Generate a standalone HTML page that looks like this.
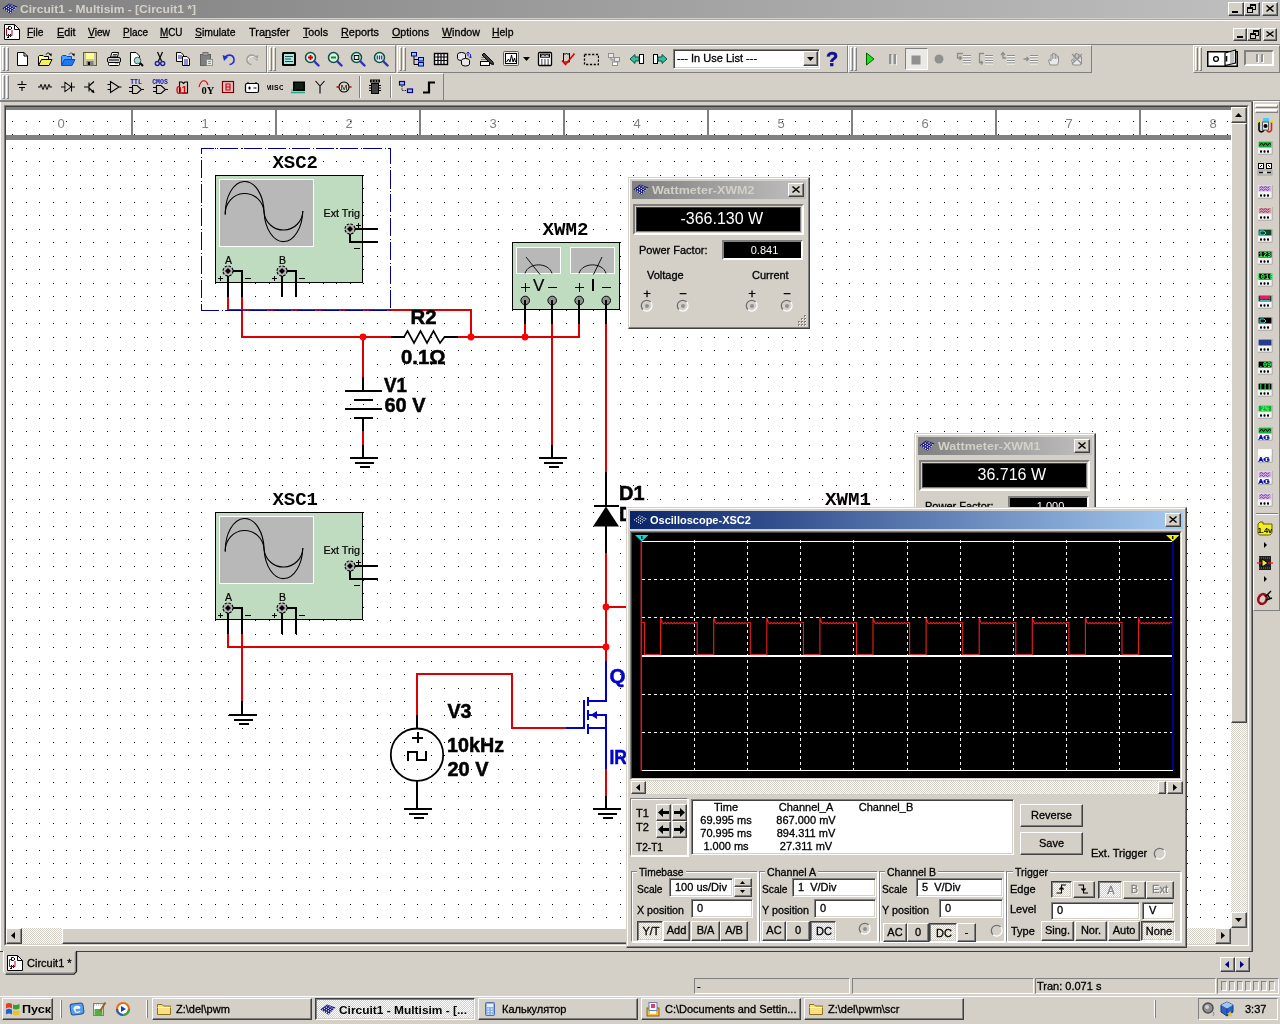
<!DOCTYPE html>
<html lang="ru"><head><meta charset="utf-8"><title>Circuit1 - Multisim - [Circuit1 *]</title>
<style>
*{box-sizing:border-box;margin:0;padding:0}
html,body{width:1280px;height:1024px;overflow:hidden;background:#d4d0c8}
body{position:relative;font-family:"Liberation Sans","DejaVu Sans",sans-serif;font-size:11px;color:#000;line-height:13px;-webkit-font-smoothing:none}
.a{position:absolute}
.t{position:absolute;white-space:nowrap;line-height:13px;height:13px;-webkit-text-stroke:0.3px currentColor}
.rb{position:absolute;background:#d4d0c8;border:1px solid;border-color:#fff #404040 #404040 #fff;box-shadow:inset -1px -1px 0 #808080,inset 1px 1px 0 #d4d0c8}
.rb2{position:absolute;background:#d4d0c8;border:1px solid;border-color:#d4d0c8 #404040 #404040 #d4d0c8;box-shadow:inset -1px -1px 0 #808080,inset 1px 1px 0 #fff}
.pb{position:absolute;border:1px solid;border-color:#404040 #fff #fff #404040;box-shadow:inset 1px 1px 0 #808080,inset -1px -1px 0 #d4d0c8;background-color:#eae8e4}
.sk{position:absolute;background:#fff;border:1px solid;border-color:#808080 #fff #fff #808080;box-shadow:inset 1px 1px 0 #404040,inset -1px -1px 0 #d4d0c8}
.sk1{position:absolute;border:1px solid;border-color:#808080 #fff #fff #808080}
.gb{position:absolute;border:1px solid;border-color:#808080 #fff #fff #808080;box-shadow:inset 1px 1px 0 #fff, 1px 1px 0 #fff}
.gl{position:absolute;background:#d4d0c8;padding:0 2px;white-space:nowrap;line-height:13px;height:13px}
.chk{background-color:#eae8e4}
.c{text-align:center}
.dis{color:#808080;text-shadow:1px 1px 0 #fff}
u{text-decoration:underline}
.win{position:absolute;background:#d4d0c8;border:1px solid;border-color:#d4d0c8 #404040 #404040 #d4d0c8;box-shadow:inset -1px -1px 0 #808080,inset 1px 1px 0 #fff}
.tb{position:absolute;height:26px;border-top:1px solid #fff;border-left:1px solid #fff;border-bottom:1px solid #808080;border-right:1px solid #808080}
.grip{position:absolute;width:3px;border-left:1px solid #fff;border-top:1px solid #fff;border-right:1px solid #808080;border-bottom:1px solid #808080}
.sep{position:absolute;width:2px;border-left:1px solid #808080;border-right:1px solid #fff}
</style></head>
<body>
<div id="root" style="position:absolute;left:0;top:0;width:1280px;height:1024px;will-change:transform">
<div class="a" style="left:0;top:0;width:1280px;height:18px;background:linear-gradient(to right,#808080,#c0c0c0)"></div><svg class="a" style="left:2px;top:1px" width="16" height="16" viewBox="0 0 16 16"><path d="M0.5 7.5 L7 2.5 L15.5 5.5 L8.5 12.8 Z" fill="#18187c"/><g stroke="#fff" stroke-width="1.1" stroke-dasharray="1.1 1.2" fill="none"><path d="M2.2 8.3 L8.2 3.6"/><path d="M4.2 9.5 L10.6 4.4"/><path d="M6.2 10.7 L12.8 5.3"/><path d="M8.2 11.8 L14.6 6.2"/></g></svg><div class="t " style="left:20px;top:3px;transform:scaleX(1.0949);transform-origin:0 0;font-weight:bold;-webkit-text-stroke:0;color:#d4d0c8">Circuit1 - Multisim - [Circuit1 *]</div><div class="rb" style="left:1228px;top:2px;width:16px;height:14px"><svg class="a" style="left:0;top:0" width="14" height="12" viewBox="0 0 14 12" shape-rendering="crispEdges"><rect x="3" y="8" width="6" height="2" fill="#000"/></svg></div><div class="rb" style="left:1244px;top:2px;width:16px;height:14px"><svg class="a" style="left:0;top:0" width="14" height="12" viewBox="0 0 14 12" shape-rendering="crispEdges"><rect x="5" y="1" width="6" height="2" fill="#000"/><rect x="5" y="1" width="1" height="3" fill="#000"/><rect x="10" y="1" width="1" height="6" fill="#000"/><rect x="8" y="6" width="3" height="1" fill="#000"/><rect x="2" y="4" width="6" height="2" fill="#000"/><rect x="2" y="4" width="1" height="6" fill="#000"/><rect x="7" y="4" width="1" height="6" fill="#000"/><rect x="2" y="9" width="6" height="1" fill="#000"/></svg></div><div class="rb" style="left:1262px;top:2px;width:16px;height:14px"><svg class="a" style="left:0;top:0" width="14" height="12" viewBox="0 0 14 12" ><path d="M3.5 2.5 L10.5 8.5 M10.5 2.5 L3.5 8.5" stroke="#000" stroke-width="1.5" fill="none"/></svg></div>
<div class="a" style="left:0;top:18px;width:1280px;height:1px;background:#d4d0c8"></div><div class="a" style="left:0;top:19px;width:1280px;height:1px;background:#a8a6a0"></div><div class="a" style="left:0;top:20px;width:1280px;height:1px;background:#fff"></div><div class="a" style="left:0;top:44px;width:1280px;height:1px;background:#808080"></div><svg class="a" style="left:4px;top:24px" width="17" height="17" viewBox="0 0 17 17"><path d="M0.5 0.5 H10.5 L15.5 5.5 V15.5 H0.5 Z" fill="#fff" stroke="#000" stroke-width="1"/><path d="M10.5 0.5 V5.5 H15.5" fill="none" stroke="#000" stroke-width="1"/><path d="M2.5 4.5 H5 M2.5 4.5 V11.5 H5 M8 6 V11.5 H6" fill="none" stroke="#b00030" stroke-width="1"/><path d="M4.5 2.5 H6.5 L8 4 L6.5 5.5 H4.5 Z" fill="#fff" stroke="#000" stroke-width="1"/><path d="M4 10 L7 13 M7 10 L4 13 M3 13.5 H5" stroke="#000" stroke-width="1" fill="none"/></svg><div class="t " style="left:27px;top:26px;transform:scaleX(0.9308);transform-origin:0 0;"><u>F</u>ile</div><div class="t " style="left:56.5px;top:26px;transform:scaleX(0.9759);transform-origin:0 0;"><u>E</u>dit</div><div class="t " style="left:88px;top:26px;transform:scaleX(0.9304);transform-origin:0 0;"><u>V</u>iew</div><div class="t " style="left:122.5px;top:26px;transform:scaleX(0.9085);transform-origin:0 0;"><u>P</u>lace</div><div class="t " style="left:160px;top:26px;transform:scaleX(0.8981);transform-origin:0 0;"><u>M</u>CU</div><div class="t " style="left:195px;top:26px;transform:scaleX(0.9463);transform-origin:0 0;"><u>S</u>imulate</div><div class="t " style="left:249px;top:26px;">Tra<u>n</u>sfer</div><div class="t " style="left:303px;top:26px;transform:scaleX(0.9735);transform-origin:0 0;"><u>T</u>ools</div><div class="t " style="left:340.5px;top:26px;transform:scaleX(0.9865);transform-origin:0 0;"><u>R</u>eports</div><div class="t " style="left:391.5px;top:26px;transform:scaleX(0.9759);transform-origin:0 0;"><u>O</u>ptions</div><div class="t " style="left:441.5px;top:26px;transform:scaleX(0.9712);transform-origin:0 0;"><u>W</u>indow</div><div class="t " style="left:492px;top:26px;transform:scaleX(0.9503);transform-origin:0 0;"><u>H</u>elp</div><div class="rb" style="left:1233px;top:28px;width:14px;height:13px"><svg class="a" style="left:0;top:0" width="12" height="11" viewBox="0 0 12 11" shape-rendering="crispEdges"><rect x="3" y="7" width="6" height="2" fill="#000"/></svg></div><div class="rb" style="left:1247px;top:28px;width:14px;height:13px"><svg class="a" style="left:0;top:0" width="12" height="11" viewBox="0 0 12 11" shape-rendering="crispEdges"><rect x="5" y="1" width="6" height="2" fill="#000"/><rect x="5" y="1" width="1" height="3" fill="#000"/><rect x="10" y="1" width="1" height="6" fill="#000"/><rect x="8" y="6" width="3" height="1" fill="#000"/><rect x="2" y="4" width="6" height="2" fill="#000"/><rect x="2" y="4" width="1" height="6" fill="#000"/><rect x="7" y="4" width="1" height="6" fill="#000"/><rect x="2" y="9" width="6" height="1" fill="#000"/></svg></div><div class="rb" style="left:1263px;top:28px;width:14px;height:13px"><svg class="a" style="left:0;top:0" width="12" height="11" viewBox="0 0 12 11" ><path d="M2.5 2.5 L9.5 7.5 M9.5 2.5 L2.5 7.5" stroke="#000" stroke-width="1.5" fill="none"/></svg></div>
<div class="a" style="left:0px;top:45px;width:267px;height:28px;border:1px solid;border-color:#fff #808080 #808080 #fff"></div><div class="a" style="left:2px;top:47px;width:3px;height:24px;border:1px solid;border-color:#fff #808080 #808080 #fff"></div><div class="a" style="left:6px;top:47px;width:3px;height:24px;border:1px solid;border-color:#fff #808080 #808080 #fff"></div><div class="a" style="left:267px;top:45px;width:129px;height:28px;border:1px solid;border-color:#fff #808080 #808080 #fff"></div><div class="a" style="left:269px;top:47px;width:3px;height:24px;border:1px solid;border-color:#fff #808080 #808080 #fff"></div><div class="a" style="left:273px;top:47px;width:3px;height:24px;border:1px solid;border-color:#fff #808080 #808080 #fff"></div><div class="a" style="left:397px;top:45px;width:451px;height:28px;border:1px solid;border-color:#fff #808080 #808080 #fff"></div><div class="a" style="left:399px;top:47px;width:3px;height:24px;border:1px solid;border-color:#fff #808080 #808080 #fff"></div><div class="a" style="left:403px;top:47px;width:3px;height:24px;border:1px solid;border-color:#fff #808080 #808080 #fff"></div><div class="a" style="left:848px;top:45px;width:244px;height:28px;border:1px solid;border-color:#fff #808080 #808080 #fff"></div><div class="a" style="left:850px;top:47px;width:3px;height:24px;border:1px solid;border-color:#fff #808080 #808080 #fff"></div><div class="a" style="left:854px;top:47px;width:3px;height:24px;border:1px solid;border-color:#fff #808080 #808080 #fff"></div><div class="a" style="left:1193px;top:45px;width:87px;height:28px;border:1px solid;border-color:#fff #808080 #808080 #fff"></div><div class="a" style="left:1195px;top:47px;width:3px;height:24px;border:1px solid;border-color:#fff #808080 #808080 #fff"></div><div class="a" style="left:1199px;top:47px;width:3px;height:24px;border:1px solid;border-color:#fff #808080 #808080 #fff"></div><svg class="a" style="left:14px;top:51px" width="16" height="16" viewBox="0 0 16 16"><path d="M3.5 1.5 H10 L13.5 5 V14.5 H3.5 Z" fill="#fff" stroke="#000"/><path d="M10 1.5 V5 H13.5" fill="none" stroke="#000"/></svg><svg class="a" style="left:37px;top:51px" width="16" height="16" viewBox="0 0 16 16"><path d="M1.5 14 V5.5 L2.5 4.5 H6 L7 5.5 H11.5 V8" fill="#ffff99" stroke="#000"/><path d="M1.5 14.5 L4.5 8.5 H15 L12 14.5 Z" fill="#f0f060" stroke="#000"/><path d="M9 3.5 C10 1.5 12.5 1.5 13.5 3.8" fill="none" stroke="#000"/><path d="M11.8 3 L14.8 2.6 L14.4 5.6 Z" fill="#000"/></svg><svg class="a" style="left:60px;top:51px" width="16" height="16" viewBox="0 0 16 16"><path d="M1.5 14 V5.5 L2.5 4.5 H6 L7 5.5 H11.5 V8" fill="#4aa0ff" stroke="#1048c0"/><path d="M1.5 14.5 L4.5 8.5 H15 L12 14.5 Z" fill="#1e78f0" stroke="#1048c0"/><path d="M9 3.5 C10 1.5 12.5 1.5 13.5 3.8" fill="none" stroke="#1048c0"/><path d="M11.8 3 L14.8 2.6 L14.4 5.6 Z" fill="#000"/></svg><svg class="a" style="left:82px;top:51px" width="16" height="16" viewBox="0 0 16 16"><rect x="1.5" y="1.5" width="13" height="13" fill="#c8c8b0" stroke="#606040"/><rect x="4" y="2" width="8" height="6" fill="#ffff90"/><rect x="4.5" y="10" width="7" height="4.5" fill="#808080"/><rect x="6" y="11" width="2" height="3" fill="#000"/></svg><svg class="a" style="left:106px;top:51px" width="16" height="16" viewBox="0 0 16 16"><path d="M4.5 6 L6 1.5 H12.5 L11.5 6 Z" fill="#fff" stroke="#000"/><path d="M7 3.5 H11 M6.5 5 H10.5" stroke="#000" stroke-width="0.8"/><rect x="1.5" y="6.5" width="13" height="5" rx="1.5" fill="#d8d8d8" stroke="#000"/><rect x="2.5" y="11.5" width="11" height="3" rx="1" fill="#fff" stroke="#000"/><path d="M3 9 H13" stroke="#000"/><rect x="9" y="12" width="3" height="1.2" fill="#e0e000"/></svg><svg class="a" style="left:128px;top:51px" width="16" height="16" viewBox="0 0 16 16"><path d="M2.5 1.5 H8 L11.5 5 V14.5 H2.5 Z" fill="#fff" stroke="#000"/><circle cx="9.5" cy="9.5" r="3.3" fill="#a8d8d0" stroke="#406060"/><path d="M12 12 L15 15" stroke="#000" stroke-width="2"/></svg><svg class="a" style="left:152px;top:51px" width="16" height="16" viewBox="0 0 16 16"><path d="M5.5 1 L9.5 10 M10.5 1 L6.5 10" stroke="#000" stroke-width="1.2" fill="none"/><circle cx="5.3" cy="12.5" r="2" fill="none" stroke="#2020a0" stroke-width="1.4"/><circle cx="10.7" cy="12.5" r="2" fill="none" stroke="#2020a0" stroke-width="1.4"/></svg><svg class="a" style="left:175px;top:51px" width="16" height="16" viewBox="0 0 16 16"><path d="M1.5 1.5 H6 L8.5 4 V10.5 H1.5 Z" fill="#fff" stroke="#000"/><path d="M3 5 H7 M3 7 H7" stroke="#2020a0"/><path d="M7.5 5.5 H12 L14.5 8 V14.5 H7.5 Z" fill="#fff" stroke="#000"/><path d="M9 9 H13 M9 11 H13 M9 13 H13" stroke="#2020a0"/></svg><svg class="a" style="left:198px;top:51px" width="16" height="16" viewBox="0 0 16 16"><rect x="2.5" y="3.5" width="10" height="11" fill="#808080" stroke="#606060"/><rect x="5" y="1.5" width="5" height="3" fill="#a0a0a0" stroke="#707070"/><rect x="8.5" y="8.5" width="6" height="6" fill="#e8e8e8" stroke="#909090"/><path d="M10 10.5 H13 M10 12.5 H13" stroke="#909090"/></svg><svg class="a" style="left:221px;top:51px" width="16" height="16" viewBox="0 0 16 16"><path d="M4 7 C6 3 12 3 13 8 C13.5 11.5 11 13.5 8.5 13.5" fill="none" stroke="#2030d0" stroke-width="1.6"/><path d="M1.5 4 L7 6 L3 10 Z" fill="#2030d0"/></svg><svg class="a" style="left:244px;top:51px" width="16" height="16" viewBox="0 0 16 16"><path d="M12 7 C10 3 4 3 3 8 C2.5 11.5 5 13.5 7.5 13.5" fill="none" stroke="#a0a0a0" stroke-width="1.6"/><path d="M14.5 4 L9 6 L13 10 Z" fill="#a0a0a0"/><path d="M12.5 8 C10.5 4.5 5 4.5 4 9" fill="none" stroke="#fff" stroke-width="0.8"/></svg><svg class="a" style="left:281px;top:51px" width="16" height="16" viewBox="0 0 16 16"><rect x="1" y="1" width="14" height="14" rx="1.5" fill="#000"/><rect x="3" y="3" width="10" height="10" fill="#b0e8e0"/><path d="M4 5.5 H12 M4 8 H10 M4 10.5 H12" stroke="#205050"/></svg><svg class="a" style="left:304px;top:51px" width="16" height="16" viewBox="0 0 16 16"><circle cx="6.5" cy="6.5" r="5" fill="#d8f0e8" stroke="#105040" stroke-width="1.5"/><path d="M4 6.5 H9 M6.5 4 V9" stroke="#d00000" stroke-width="1.8"/><path d="M10.5 10.5 L14.5 14.5" stroke="#3030c0" stroke-width="2.4" stroke-linecap="round"/></svg><svg class="a" style="left:327px;top:51px" width="16" height="16" viewBox="0 0 16 16"><circle cx="6.5" cy="6.5" r="5" fill="#d8f0e8" stroke="#105040" stroke-width="1.5"/><path d="M4 6.5 H9" stroke="#109020" stroke-width="2"/><path d="M10.5 10.5 L14.5 14.5" stroke="#3030c0" stroke-width="2.4" stroke-linecap="round"/></svg><svg class="a" style="left:350px;top:51px" width="16" height="16" viewBox="0 0 16 16"><circle cx="6.5" cy="6.5" r="5" fill="#d8f0e8" stroke="#105040" stroke-width="1.5"/><rect x="4.3" y="4.5" width="4.5" height="4" fill="none" stroke="#000" stroke-width="1"/><path d="M10.5 10.5 L14.5 14.5" stroke="#3030c0" stroke-width="2.4" stroke-linecap="round"/></svg><svg class="a" style="left:373px;top:51px" width="16" height="16" viewBox="0 0 16 16"><circle cx="6.5" cy="6.5" r="5" fill="#d8f0e8" stroke="#105040" stroke-width="1.5"/><path d="M4.3 4.5 V8.5 M6.5 4.5 V8.5 M8.7 4.5 V8.5" stroke="#2030c0" stroke-width="1.2"/><path d="M10.5 10.5 L14.5 14.5" stroke="#3030c0" stroke-width="2.4" stroke-linecap="round"/></svg><svg class="a" style="left:410px;top:51px" width="16" height="16" viewBox="0 0 16 16"><rect x="1.5" y="1.5" width="5" height="3.5" fill="#8cc8ff" stroke="#000080"/><rect x="8.5" y="6.5" width="5" height="3.5" fill="#8cc8ff" stroke="#000080"/><rect x="8.5" y="11.5" width="5" height="3.5" fill="#8cc8ff" stroke="#000080"/><path d="M4 5 V13.5 H8.5 M4 8.5 H8.5" fill="none" stroke="#000"/></svg><svg class="a" style="left:433px;top:51px" width="16" height="16" viewBox="0 0 16 16"><rect x="1.5" y="2.5" width="13" height="11" fill="#fff" stroke="#000" stroke-width="1.4"/><path d="M1.5 6 H14.5 M1.5 9.5 H14.5 M5 2.5 V13.5 M8 2.5 V13.5 M11 2.5 V13.5" stroke="#000" stroke-width="1.2"/></svg><svg class="a" style="left:456px;top:51px" width="16" height="16" viewBox="0 0 16 16"><ellipse cx="5.5" cy="3.5" rx="4" ry="2" fill="#e8e8e8" stroke="#000"/><path d="M1.5 3.5 V7.5 A4 2 0 0 0 9.5 7.5 V3.5" fill="#e8e8e8" stroke="#000"/><ellipse cx="9.5" cy="9.5" rx="4" ry="2" fill="#e8e8e8" stroke="#000"/><path d="M5.5 9.5 V13 A4 2 0 0 0 13.5 13 V9.5" fill="#e8e8e8" stroke="#000"/><path d="M12 1 V5 M10.5 2.5 L12 1 L13.5 2.5 M14.5 3 V7 M13 5.5 L14.5 7 L16 5.5" fill="none" stroke="#2020c0"/></svg><svg class="a" style="left:479px;top:51px" width="16" height="16" viewBox="0 0 16 16"><rect x="1.5" y="10.5" width="9" height="4" fill="#fff" stroke="#000"/><path d="M3 4 L5 2 L14 11 L14.5 13.5 L12 13 Z" fill="#404040" stroke="#000"/><path d="M2 6.5 H5 M2 8.5 H7" stroke="#c08000"/></svg><svg class="a" style="left:503px;top:51px" width="16" height="16" viewBox="0 0 16 16"><rect x="0.5" y="0.5" width="15" height="14" rx="1" fill="#e8e8e8" stroke="#606060"/><rect x="2.5" y="2.5" width="11" height="10" fill="#fff" stroke="#000"/><path d="M3.5 11 L5.5 8 L7 11 L8.5 4 L10 11 L11.5 7 L12.5 11" fill="none" stroke="#000"/></svg><svg class="a" style="left:537px;top:51px" width="16" height="16" viewBox="0 0 16 16"><rect x="1.5" y="1.5" width="13" height="13" rx="1" fill="#fff" stroke="#000" stroke-width="1.3"/><rect x="3.5" y="3.2" width="9" height="3" fill="#fff" stroke="#000"/><path d="M4 5 L6 3.5 L8 5 L10 3.5 L12 5" fill="none" stroke="#000" stroke-width="0.8"/><path d="M4 9 H5.5 M7.2 9 H8.7 M10.4 9 H11.9 M4 11 H5.5 M7.2 11 H8.7 M10.4 11 H11.9 M4 13 H5.5 M7.2 13 H8.7 M10.4 13 H11.9" stroke="#000" stroke-width="1.2"/></svg><svg class="a" style="left:560px;top:51px" width="16" height="16" viewBox="0 0 16 16"><path d="M3.5 2 V11 H9.5 V2" fill="none" stroke="#000"/><path d="M3.5 2 L5 3.5 L6.5 2 L8 3.5 L9.5 2" fill="none" stroke="#000"/><path d="M2 9.5 L5.5 13.5 L14.5 2.5" fill="none" stroke="#e00000" stroke-width="1.6"/></svg><svg class="a" style="left:583px;top:51px" width="16" height="16" viewBox="0 0 16 16"><rect x="1.5" y="3.5" width="14" height="10" fill="none" stroke="#000" stroke-width="1.3" stroke-dasharray="2.2 1.6"/></svg><svg class="a" style="left:606px;top:51px" width="16" height="16" viewBox="0 0 16 16"><rect x="2.5" y="2.5" width="5" height="4" fill="#e8e8e8" stroke="#909090"/><rect x="8.5" y="6.5" width="5" height="4" fill="#e8e8e8" stroke="#909090"/><rect x="6.5" y="11" width="5" height="3.5" fill="#fff" stroke="#909090"/><path d="M5 6.5 V9 H8.5 M9 11 V10.5" fill="none" stroke="#909090"/></svg><svg class="a" style="left:629px;top:51px" width="16" height="16" viewBox="0 0 16 16"><path d="M1 8 L6 3.5 V6 H10 V10 H6 V12.5 Z" fill="#30c0a0" stroke="#105040"/><rect x="10.5" y="3.5" width="4" height="9" fill="#fff" stroke="#000"/></svg><svg class="a" style="left:652px;top:51px" width="16" height="16" viewBox="0 0 16 16"><rect x="1.5" y="3.5" width="4" height="9" fill="#fff" stroke="#000"/><path d="M15 8 L10 3.5 V6 H6 V10 H10 V12.5 Z" fill="#30c0a0" stroke="#105040"/></svg><svg class="a" style="left:523px;top:57px" width="7" height="4"><path d="M0 0 H7 L3.5 4 Z" fill="#000"/></svg><div class="sk" style="left:673px;top:49px;width:147px;height:20px"></div><div class="t " style="left:677px;top:52px;">--- In Use List ---</div><div class="rb" style="left:803px;top:51px;width:15px;height:15px"><svg class="a" style="left:3px;top:5px" width="7" height="4"><path d="M0 0 H7 L3.5 4 Z" fill="#000"/></svg></div><svg class="a" style="left:824px;top:51px" width="16" height="16" viewBox="0 0 16 16"><text x="8" y="15" text-anchor="middle" font-family="Liberation Sans,sans-serif" font-weight="bold" font-size="20" fill="#10108c" stroke="#10108c" stroke-width="0.6">?</text></svg><div class="a chk" style="left:905px;top:48px;width:23px;height:22px;border:1px solid;border-color:#808080 #fff #fff #808080;background:#ebe9e5"></div><svg class="a" style="left:862px;top:51px" width="16" height="16" viewBox="0 0 16 16"><path d="M4.5 2 L12 8 L4.5 14 Z" fill="#20e020" stroke="#006000" stroke-width="1"/></svg><svg class="a" style="left:885px;top:51px" width="16" height="16" viewBox="0 0 16 16"><rect x="4" y="3" width="2.6" height="10" fill="#909090"/><rect x="8.6" y="3" width="2.6" height="10" fill="#909090"/><rect x="6.6" y="4" width="0.8" height="10" fill="#fff"/><rect x="11.2" y="4" width="0.8" height="10" fill="#fff"/></svg><svg class="a" style="left:908px;top:52px" width="16" height="16" viewBox="0 0 16 16"><rect x="3.5" y="3.5" width="9" height="9" fill="#909090"/></svg><svg class="a" style="left:931px;top:51px" width="16" height="16" viewBox="0 0 16 16"><circle cx="8" cy="8" r="4.5" fill="#909090"/></svg><svg class="a" style="left:956px;top:51px" width="16" height="16" viewBox="0 0 16 16"><path d="M7 4.5 H15 M7 7 H15 M7 9.5 H15 M7 12 H15" stroke="#8c8c8c" stroke-width="1"/><path d="M7 5.5 H15 M7 8 H15 M7 10.5 H15 M7 13 H15" stroke="#fff" stroke-width="0.8"/><path d="M6 7 H1.5 V2.5 H7 M1.5 7 H5 M3.5 5 L5.5 7 L3.5 9" fill="none" stroke="#8c8c8c" stroke-width="1.3"/></svg><svg class="a" style="left:978px;top:51px" width="16" height="16" viewBox="0 0 16 16"><path d="M7 4.5 H15 M7 7 H15 M7 9.5 H15 M7 12 H15" stroke="#8c8c8c" stroke-width="1"/><path d="M7 5.5 H15 M7 8 H15 M7 10.5 H15 M7 13 H15" stroke="#fff" stroke-width="0.8"/><path d="M6 2.5 H1.5 V11.5 H4 M3 10 L4.5 11.5 L3 13.5" fill="none" stroke="#8c8c8c" stroke-width="1.3"/></svg><svg class="a" style="left:1000px;top:51px" width="16" height="16" viewBox="0 0 16 16"><path d="M7 4.5 H15 M7 7 H15 M7 9.5 H15 M7 12 H15" stroke="#8c8c8c" stroke-width="1"/><path d="M7 5.5 H15 M7 8 H15 M7 10.5 H15 M7 13 H15" stroke="#fff" stroke-width="0.8"/><path d="M3 2 V7 H6 M1 4 L3 1.5 L5 4" fill="none" stroke="#8c8c8c" stroke-width="1.3"/></svg><svg class="a" style="left:1023px;top:51px" width="16" height="16" viewBox="0 0 16 16"><path d="M7 4.5 H15 M7 7 H15 M7 9.5 H15 M7 12 H15" stroke="#8c8c8c" stroke-width="1"/><path d="M7 5.5 H15 M7 8 H15 M7 10.5 H15 M7 13 H15" stroke="#fff" stroke-width="0.8"/><path d="M0.5 8 H5.5 M3.5 6 L5.5 8 L3.5 10" fill="none" stroke="#8c8c8c" stroke-width="1.3"/></svg><svg class="a" style="left:1046px;top:51px" width="16" height="16" viewBox="0 0 16 16"><path d="M4 14 L2.5 9 L4 8.5 L5 10 V4 H6.5 V2.5 H8 V3 H9.5 V4 H11 V5.5 H12.5 V11 L11.5 14 Z" fill="#e8e8e8" stroke="#909090" stroke-width="1"/><path d="M6.5 4 V8 M8 3 V8 M9.5 4 V8 M11 5.5 V8" stroke="#909090" stroke-width="0.8"/></svg><svg class="a" style="left:1069px;top:51px" width="16" height="16" viewBox="0 0 16 16"><path d="M4 14 L2.5 9 L4 8.5 L5 10 V4 H6.5 V2.5 H8 V3 H9.5 V4 H11 V5.5 H12.5 V11 L11.5 14 Z" fill="#e8e8e8" stroke="#909090" stroke-width="1"/><path d="M6.5 4 V8 M8 3 V8 M9.5 4 V8 M11 5.5 V8" stroke="#909090" stroke-width="0.8"/><path d="M3 3 L13 13 M13 3 L3 13" stroke="#909090" stroke-width="1.2"/></svg><svg class="a" style="left:1207px;top:49px" width="31" height="18" viewBox="0 0 31 18"><rect x="0.75" y="2.75" width="29.5" height="14.5" fill="#fff" stroke="#000" stroke-width="1.5"/><path d="M18 4 L28.5 1 V14 L18 16.5 Z" fill="#fff" stroke="#000" stroke-width="1.2"/><path d="M19.5 7 V12.5" stroke="#000" stroke-width="1.6"/><path d="M24 3 V14.8 M26 2.5 V14.3" stroke="#808080" stroke-width="1"/><ellipse cx="9" cy="10" rx="2.4" ry="2.4" fill="none" stroke="#000" stroke-width="1.3"/></svg><div class="a" style="left:1244px;top:50px;width:30px;height:16px;border:2px solid;border-color:#808080 #fff #fff #808080"></div><div class="a" style="left:1256px;top:54px;width:2px;height:8px;background:#909090;box-shadow:1px 1px 0 #fff"></div><div class="a" style="left:1261px;top:54px;width:2px;height:8px;background:#909090;box-shadow:1px 1px 0 #fff"></div><div class="a" style="left:0px;top:73px;width:444px;height:28px;border:1px solid;border-color:#fff #808080 #808080 #fff"></div><div class="a" style="left:2px;top:75px;width:3px;height:24px;border:1px solid;border-color:#fff #808080 #808080 #fff"></div><div class="a" style="left:6px;top:75px;width:3px;height:24px;border:1px solid;border-color:#fff #808080 #808080 #fff"></div><svg class="a" style="left:14px;top:79px" width="16" height="16" viewBox="0 0 16 16"><path d="M8 2 V5.5 M3.5 5.5 H12.5 M5 8.5 H11 M8 8.5 V12" stroke="#000" stroke-width="1.1" fill="none"/></svg><svg class="a" style="left:37px;top:79px" width="16" height="16" viewBox="0 0 16 16"><path d="M1 8 H3 Q4 3 5 8 T7 8 T9 8 T11 8 T13 8 H15" stroke="#000" stroke-width="1.1" fill="none"/></svg><svg class="a" style="left:60px;top:79px" width="16" height="16" viewBox="0 0 16 16"><path d="M1 8 H15 M5 3.5 V12.5 L11 8 Z M11.5 3.5 V12.5 M5 3.5 L11 8" stroke="#000" stroke-width="1.1" fill="none"/><path d="M5.5 4.5 V11.5 L10.5 8 Z" fill="#d4d0c8"/></svg><svg class="a" style="left:82px;top:79px" width="16" height="16" viewBox="0 0 16 16"><path d="M2 8 H7 M7 3.5 V12.5 M7 7 L12 2.5 M7 9 L12 13.5" stroke="#000" stroke-width="1.1" fill="none"/><path d="M12.5 14 L9 13 L11.5 10.5 Z" fill="#000"/></svg><svg class="a" style="left:106px;top:79px" width="16" height="16" viewBox="0 0 16 16"><path d="M4.5 2.5 V13.5 L13 8 Z M1.5 5.5 H4.5 M1.5 10.5 H4.5 M13 8 H15.5" stroke="#000" stroke-width="1.1" fill="none"/></svg><svg class="a" style="left:128px;top:79px" width="16" height="16" viewBox="0 0 16 16"><text x="8" y="5" text-anchor="middle" font-family="Liberation Mono,monospace" font-weight="bold" font-size="6.5" fill="#1010c0">TTL</text><path d="M4.5 6.5 H9 L13.5 10.5 L9 14.5 H4.5 Z M1 8.5 H4.5 M1 12.5 H4.5 M13.5 10.5 H16" stroke="#000" stroke-width="1.1" fill="none"/></svg><svg class="a" style="left:152px;top:79px" width="16" height="16" viewBox="0 0 16 16"><text x="8" y="5" text-anchor="middle" font-family="Liberation Mono,monospace" font-weight="bold" font-size="6.5" fill="#1010c0">CMOS</text><path d="M4.5 6.5 H9 L13.5 10.5 L9 14.5 H4.5 Z M1 8.5 H4.5 M1 12.5 H4.5 M13.5 10.5 H16" stroke="#000" stroke-width="1.1" fill="none"/></svg><svg class="a" style="left:175px;top:79px" width="16" height="16" viewBox="0 0 16 16"><path d="M4.5 3 H7 L8.5 4.5 L10 3 H12.5 V14 H4.5 Z" fill="none" stroke="#000" stroke-width="1.1"/><text x="1" y="14.5" font-family="Liberation Sans,sans-serif" font-weight="bold" font-size="10" fill="#e00000">01</text></svg><svg class="a" style="left:198px;top:79px" width="16" height="16" viewBox="0 0 16 16"><path d="M1 8 C3 0 8 0 10 6" fill="none" stroke="#e00000" stroke-width="1.1"/><text x="3.5" y="15" font-family="Liberation Serif,serif" font-weight="bold" font-size="10.5" fill="#000">0Y</text></svg><svg class="a" style="left:220px;top:79px" width="16" height="16" viewBox="0 0 16 16"><rect x="2.5" y="2.5" width="11" height="11" fill="#f0c0c0" stroke="#700000" stroke-width="1.2"/><path d="M6 5 H10 V8 H6 Z M6 8 V11 H10 V8" fill="none" stroke="#c00000" stroke-width="1.1"/></svg><svg class="a" style="left:244px;top:79px" width="16" height="16" viewBox="0 0 16 16"><rect x="1.5" y="4.5" width="13" height="9" rx="1.5" fill="#fff" stroke="#000" stroke-width="1.2"/><path d="M4 3 V4.5 M12 3 V4.5 M4 9 H7 M5.5 7.5 V10.5 M9.5 9 H12.5" stroke="#000" stroke-width="1.1"/></svg><svg class="a" style="left:267px;top:79px" width="16" height="16" viewBox="0 0 16 16"><text x="8" y="11" text-anchor="middle" font-family="Liberation Sans,sans-serif" font-weight="bold" font-size="7" fill="#000" letter-spacing="0.3">MISC</text></svg><svg class="a" style="left:290px;top:79px" width="16" height="16" viewBox="0 0 16 16"><rect x="3" y="2.5" width="12" height="9.5" fill="#000"/><rect x="4.5" y="4" width="9" height="6.5" fill="#102018"/><path d="M1 13.5 H15" stroke="#20b090" stroke-width="1.6"/><path d="M1 11 H3" stroke="#20b090" stroke-width="1.2"/></svg><svg class="a" style="left:312px;top:79px" width="16" height="16" viewBox="0 0 16 16"><path d="M8 14.5 V7 M8 7 L3.5 2 M8 7 L12.5 2" stroke="#000" stroke-width="1.1" fill="none"/></svg><svg class="a" style="left:336px;top:79px" width="16" height="16" viewBox="0 0 16 16"><circle cx="8" cy="8" r="5" fill="none" stroke="#000" stroke-width="1.1"/><path d="M0.5 8 H3 M13 8 H15.5" stroke="#c00000" stroke-width="1.3"/><text x="8" y="11" text-anchor="middle" font-family="Liberation Sans,sans-serif" font-size="8" fill="#000">M</text></svg><svg class="a" style="left:367px;top:79px" width="16" height="16" viewBox="0 0 16 16"><rect x="4.5" y="4.5" width="7" height="10" fill="#404040" stroke="#000"/><path d="M2 6.5 H4.5 M2 9 H4.5 M2 11.5 H4.5 M11.5 6.5 H14 M11.5 9 H14 M11.5 11.5 H14" stroke="#000" stroke-width="1.2"/><rect x="3" y="0.5" width="10" height="3" fill="#000"/><path d="M4.5 2 H6 M7.5 2 H9 M10 2 H11.5" stroke="#fff" stroke-width="0.8"/></svg><svg class="a" style="left:398px;top:79px" width="16" height="16" viewBox="0 0 16 16"><rect x="1.5" y="2.5" width="5" height="3.5" fill="#a0c0ff" stroke="#000080" stroke-width="1.2"/><rect x="9.5" y="10" width="5" height="3.5" fill="#a0c0ff" stroke="#000080" stroke-width="1.2"/><path d="M4 7 V11.5 H9" fill="none" stroke="#000" stroke-width="1" stroke-dasharray="1.2 1.2"/></svg><svg class="a" style="left:421px;top:79px" width="16" height="16" viewBox="0 0 16 16"><path d="M2 13.5 H8 V3.5 H14" fill="none" stroke="#000" stroke-width="2.2"/></svg><div class="sep" style="left:359px;top:76px;height:22px"></div><div class="sep" style="left:390px;top:76px;height:22px"></div><div class="a" style="left:0;top:101px;width:1253px;height:1px;background:#808080"></div><div class="a" style="left:0;top:100px;width:1280px;height:1px;background:#808080"></div>
<div class="a" style="left:0;top:102px;width:1253px;height:850px;background:#d4d0c8"></div><div class="a" style="left:0;top:102px;width:1px;height:849px;background:#fff"></div><div class="a" style="left:4px;top:105px;width:1245px;height:841px;border:1px solid;border-color:#808080 #fff #fff #808080"></div><div class="a" style="left:5px;top:106px;width:1243px;height:839px;border:1px solid;border-color:#404040 #d4d0c8 #d4d0c8 #404040"></div><div class="a" style="left:1251px;top:102px;width:1px;height:850px;background:#808080"></div><div class="a" style="left:1252px;top:102px;width:1px;height:850px;background:#404040"></div><div class="a" style="left:0;top:951px;width:1253px;height:1px;background:#404040"></div><svg class="a sch" style="left:6px;top:107px" width="1225" height="821" viewBox="6 107 1225 821"><defs><pattern id="dg" x="12" y="121" width="27" height="27" patternUnits="userSpaceOnUse"><rect x="0" y="0" width="1" height="1" fill="#000"/><rect x="14" y="0" width="1" height="1" fill="#000"/><rect x="0" y="13" width="1" height="1" fill="#000"/><rect x="14" y="13" width="1" height="1" fill="#000"/></pattern></defs><rect x="6" y="107" width="1225" height="821" fill="#fff"/><rect x="6" y="107" width="1225" height="3" fill="#808080"/><rect x="6" y="135" width="1225" height="5" fill="#808080"/><rect x="131" y="110" width="2" height="25" fill="#808080"/><text x="61" y="128" font-size="13" fill="#808080" text-anchor="middle" font-family='"Liberation Sans",sans-serif'>0</text><rect x="275" y="110" width="2" height="25" fill="#808080"/><text x="205" y="128" font-size="13" fill="#808080" text-anchor="middle" font-family='"Liberation Sans",sans-serif'>1</text><rect x="419" y="110" width="2" height="25" fill="#808080"/><text x="349" y="128" font-size="13" fill="#808080" text-anchor="middle" font-family='"Liberation Sans",sans-serif'>2</text><rect x="563" y="110" width="2" height="25" fill="#808080"/><text x="493" y="128" font-size="13" fill="#808080" text-anchor="middle" font-family='"Liberation Sans",sans-serif'>3</text><rect x="707" y="110" width="2" height="25" fill="#808080"/><text x="637" y="128" font-size="13" fill="#808080" text-anchor="middle" font-family='"Liberation Sans",sans-serif'>4</text><rect x="851" y="110" width="2" height="25" fill="#808080"/><text x="781" y="128" font-size="13" fill="#808080" text-anchor="middle" font-family='"Liberation Sans",sans-serif'>5</text><rect x="995" y="110" width="2" height="25" fill="#808080"/><text x="925" y="128" font-size="13" fill="#808080" text-anchor="middle" font-family='"Liberation Sans",sans-serif'>6</text><rect x="1139" y="110" width="2" height="25" fill="#808080"/><text x="1069" y="128" font-size="13" fill="#808080" text-anchor="middle" font-family='"Liberation Sans",sans-serif'>7</text><rect x="1283" y="110" width="2" height="25" fill="#808080"/><text x="1213" y="128" font-size="13" fill="#808080" text-anchor="middle" font-family='"Liberation Sans",sans-serif'>8</text><rect x="6" y="110" width="1225" height="818" fill="url(#dg)" shape-rendering="crispEdges"/><g shape-rendering="crispEdges"><rect x="227" y="296" width="2" height="15" fill="#dc0000"/><rect x="227" y="309" width="245" height="2" fill="#dc0000"/><rect x="470" y="309" width="2" height="29" fill="#dc0000"/><rect x="241" y="296" width="2" height="42" fill="#dc0000"/><rect x="241" y="336" width="151" height="2" fill="#dc0000"/><rect x="457" y="336" width="123" height="2" fill="#dc0000"/><rect x="578" y="322" width="2" height="16" fill="#dc0000"/><rect x="524" y="322" width="2" height="16" fill="#dc0000"/><rect x="362" y="336" width="2" height="42" fill="#dc0000"/><rect x="362" y="430" width="2" height="16" fill="#dc0000"/><rect x="551" y="322" width="2" height="124" fill="#dc0000"/><rect x="605" y="322" width="2" height="151" fill="#dc0000"/><rect x="605" y="552" width="2" height="110" fill="#dc0000"/><rect x="605" y="606" width="36" height="2" fill="#dc0000"/><rect x="227" y="633" width="2" height="15" fill="#dc0000"/><rect x="227" y="646" width="380" height="2" fill="#dc0000"/><rect x="241" y="633" width="2" height="69" fill="#dc0000"/><rect x="416" y="673" width="2" height="43" fill="#dc0000"/><rect x="416" y="673" width="97" height="2" fill="#dc0000"/><rect x="511" y="673" width="2" height="56" fill="#dc0000"/><rect x="511" y="727" width="56" height="2" fill="#dc0000"/><rect x="605" y="768" width="2" height="29" fill="#dc0000"/><g fill="none" stroke="#000088" stroke-width="1" stroke-dasharray="18 3 1 2"><path d="M201 148.5 H391" stroke-dashoffset="5"/><path d="M201.5 148 V311" stroke-dashoffset="12"/><path d="M201 310.5 H391" stroke-dashoffset="0"/><path d="M390.5 148 V311" stroke-dashoffset="2.5"/></g><rect x="215" y="175" width="148" height="108" fill="#c0dcc0"/><rect x="215" y="175" width="148" height="1" fill="#000"/><rect x="215" y="175" width="1" height="108" fill="#000"/><rect x="215" y="282" width="148" height="1" fill="#000"/><rect x="362" y="175" width="1" height="108" fill="#000"/><rect x="219.5" y="179.5" width="94" height="67" fill="#b8b8b8" stroke="#fff" stroke-width="1"/><path d="M225.3 214.5 A19.4 32 0 0 1 264.1 212.5 A19.4 32 0 0 0 302.8 211" fill="none" stroke="#000" stroke-width="1.1" shape-rendering="auto"/><path d="M225.3 214.5 A19.4 20 0 0 1 264.1 212.5 A19.4 19.5 0 0 0 302.8 211" fill="none" stroke="#000" stroke-width="1.1" shape-rendering="auto"/><text x="323.5" y="216.8" style='font-family:"Liberation Sans","DejaVu Sans",sans-serif' font-weight="normal" font-size="10.5" fill="#000" stroke="#000" stroke-width="0.2" text-anchor="start" textLength="36.5" lengthAdjust="spacingAndGlyphs">Ext Trig</text><rect x="349" y="228" width="29" height="2" fill="#000"/><rect x="349" y="228" width="2" height="15" fill="#000"/><rect x="349" y="241" width="29" height="2" fill="#000"/><g shape-rendering="auto"><circle cx="350" cy="229" r="5" fill="#b4b4b4" stroke="#000" stroke-width="1.1" stroke-dasharray="2.6 1.3"/><path d="M347 229 L350 226 L353 229 L350 232 Z" fill="#000"/></g><path d="M356.0 225.5 H361.0 M358.5 223.0 V228.0" stroke="#000" stroke-width="1" fill="none"/><path d="M354 248.5 H360" stroke="#000" stroke-width="1" fill="none"/><rect x="227" y="270" width="2" height="27" fill="#000"/><rect x="227" y="270" width="16" height="2" fill="#000"/><rect x="241" y="270" width="2" height="27" fill="#000"/><g shape-rendering="auto"><circle cx="228" cy="271" r="5" fill="#b4b4b4" stroke="#000" stroke-width="1.1" stroke-dasharray="2.6 1.3"/><path d="M225 271 L228 268 L231 271 L228 274 Z" fill="#000"/></g><text x="228.5" y="263.5" style='font-family:"Liberation Sans","DejaVu Sans",sans-serif' font-weight="normal" font-size="10.5" fill="#000" stroke="#000" stroke-width="0.2" text-anchor="middle">A</text><path d="M218.0 278.5 H223.0 M220.5 276.0 V281.0" stroke="#000" stroke-width="1" fill="none"/><path d="M245 278.5 H251" stroke="#000" stroke-width="1" fill="none"/><rect x="281" y="270" width="2" height="27" fill="#000"/><rect x="281" y="270" width="16" height="2" fill="#000"/><rect x="295" y="270" width="2" height="27" fill="#000"/><g shape-rendering="auto"><circle cx="282" cy="271" r="5" fill="#b4b4b4" stroke="#000" stroke-width="1.1" stroke-dasharray="2.6 1.3"/><path d="M279 271 L282 268 L285 271 L282 274 Z" fill="#000"/></g><text x="282.5" y="263.5" style='font-family:"Liberation Sans","DejaVu Sans",sans-serif' font-weight="normal" font-size="10.5" fill="#000" stroke="#000" stroke-width="0.2" text-anchor="middle">B</text><path d="M272.0 278.5 H277.0 M274.5 276.0 V281.0" stroke="#000" stroke-width="1" fill="none"/><path d="M299 278.5 H305" stroke="#000" stroke-width="1" fill="none"/><text x="272.5" y="167.5" style='font-family:"Liberation Mono","DejaVu Sans Mono",monospace' font-weight="bold" font-size="19" fill="#000" stroke="#000" stroke-width="0" text-anchor="start" textLength="45.5" lengthAdjust="spacingAndGlyphs">XSC2</text><rect x="215" y="512" width="148" height="108" fill="#c0dcc0"/><rect x="215" y="512" width="148" height="1" fill="#000"/><rect x="215" y="512" width="1" height="108" fill="#000"/><rect x="215" y="619" width="148" height="1" fill="#000"/><rect x="362" y="512" width="1" height="108" fill="#000"/><rect x="219.5" y="516.5" width="94" height="67" fill="#b8b8b8" stroke="#fff" stroke-width="1"/><path d="M225.3 551.5 A19.4 32 0 0 1 264.1 549.5 A19.4 32 0 0 0 302.8 548" fill="none" stroke="#000" stroke-width="1.1" shape-rendering="auto"/><path d="M225.3 551.5 A19.4 20 0 0 1 264.1 549.5 A19.4 19.5 0 0 0 302.8 548" fill="none" stroke="#000" stroke-width="1.1" shape-rendering="auto"/><text x="323.5" y="553.8" style='font-family:"Liberation Sans","DejaVu Sans",sans-serif' font-weight="normal" font-size="10.5" fill="#000" stroke="#000" stroke-width="0.2" text-anchor="start" textLength="36.5" lengthAdjust="spacingAndGlyphs">Ext Trig</text><rect x="349" y="565" width="29" height="2" fill="#000"/><rect x="349" y="565" width="2" height="15" fill="#000"/><rect x="349" y="578" width="29" height="2" fill="#000"/><g shape-rendering="auto"><circle cx="350" cy="566" r="5" fill="#b4b4b4" stroke="#000" stroke-width="1.1" stroke-dasharray="2.6 1.3"/><path d="M347 566 L350 563 L353 566 L350 569 Z" fill="#000"/></g><path d="M356.0 562.5 H361.0 M358.5 560.0 V565.0" stroke="#000" stroke-width="1" fill="none"/><path d="M354 585.5 H360" stroke="#000" stroke-width="1" fill="none"/><rect x="227" y="607" width="2" height="27" fill="#000"/><rect x="227" y="607" width="16" height="2" fill="#000"/><rect x="241" y="607" width="2" height="27" fill="#000"/><g shape-rendering="auto"><circle cx="228" cy="608" r="5" fill="#b4b4b4" stroke="#000" stroke-width="1.1" stroke-dasharray="2.6 1.3"/><path d="M225 608 L228 605 L231 608 L228 611 Z" fill="#000"/></g><text x="228.5" y="600.5" style='font-family:"Liberation Sans","DejaVu Sans",sans-serif' font-weight="normal" font-size="10.5" fill="#000" stroke="#000" stroke-width="0.2" text-anchor="middle">A</text><path d="M218.0 615.5 H223.0 M220.5 613.0 V618.0" stroke="#000" stroke-width="1" fill="none"/><path d="M245 615.5 H251" stroke="#000" stroke-width="1" fill="none"/><rect x="281" y="607" width="2" height="27" fill="#000"/><rect x="281" y="607" width="16" height="2" fill="#000"/><rect x="295" y="607" width="2" height="27" fill="#000"/><g shape-rendering="auto"><circle cx="282" cy="608" r="5" fill="#b4b4b4" stroke="#000" stroke-width="1.1" stroke-dasharray="2.6 1.3"/><path d="M279 608 L282 605 L285 608 L282 611 Z" fill="#000"/></g><text x="282.5" y="600.5" style='font-family:"Liberation Sans","DejaVu Sans",sans-serif' font-weight="normal" font-size="10.5" fill="#000" stroke="#000" stroke-width="0.2" text-anchor="middle">B</text><path d="M272.0 615.5 H277.0 M274.5 613.0 V618.0" stroke="#000" stroke-width="1" fill="none"/><path d="M299 615.5 H305" stroke="#000" stroke-width="1" fill="none"/><text x="272.5" y="504.5" style='font-family:"Liberation Mono","DejaVu Sans Mono",monospace' font-weight="bold" font-size="19" fill="#000" stroke="#000" stroke-width="0" text-anchor="start" textLength="45.5" lengthAdjust="spacingAndGlyphs">XSC1</text><rect x="512" y="242" width="108" height="68" fill="#c0dcc0"/><rect x="512" y="242" width="108" height="1" fill="#000"/><rect x="512" y="242" width="1" height="68" fill="#000"/><rect x="512" y="309" width="108" height="1" fill="#000"/><rect x="619" y="242" width="1" height="68" fill="#000"/><rect x="516.5" y="247.5" width="44" height="26" fill="#b8b8b8" stroke="#fff" stroke-width="1"/><rect x="570.5" y="247.5" width="44" height="26" fill="#b8b8b8" stroke="#fff" stroke-width="1"/><g shape-rendering="auto" fill="none" stroke="#000" stroke-width="0.9"><path d="M525 273.5 C528 262 549 262 552 273.5"/><path d="M526 257 L540 274.5"/><path d="M579 273.5 C582 262 603 262 606 273.5"/><path d="M602 257 L593.5 274.5"/></g><rect x="524" y="300" width="2" height="24" fill="#000"/><circle cx="525.2" cy="300.5" r="4.3" fill="#909090" stroke="#000" stroke-width="1" shape-rendering="auto"/><rect x="524" y="300" width="2" height="6" fill="#000"/><rect x="551" y="300" width="2" height="24" fill="#000"/><circle cx="552.2" cy="300.5" r="4.3" fill="#909090" stroke="#000" stroke-width="1" shape-rendering="auto"/><rect x="551" y="300" width="2" height="6" fill="#000"/><rect x="578" y="300" width="2" height="24" fill="#000"/><circle cx="579.2" cy="300.5" r="4.3" fill="#909090" stroke="#000" stroke-width="1" shape-rendering="auto"/><rect x="578" y="300" width="2" height="6" fill="#000"/><rect x="605" y="300" width="2" height="24" fill="#000"/><circle cx="606.2" cy="300.5" r="4.3" fill="#909090" stroke="#000" stroke-width="1" shape-rendering="auto"/><rect x="605" y="300" width="2" height="6" fill="#000"/><path d="M520.7 287.5 H529.7 M525.2 283.0 V292.0" stroke="#000" stroke-width="1" fill="none"/><path d="M548.3000000000001 287.5 H556.9" stroke="#000" stroke-width="1" fill="none"/><path d="M575.2 287.5 H584.2 M579.7 283.0 V292.0" stroke="#000" stroke-width="1" fill="none"/><path d="M602.1 287.5 H610.6999999999999" stroke="#000" stroke-width="1" fill="none"/><text x="538.7" y="290.5" style='font-family:"Liberation Sans","DejaVu Sans",sans-serif' font-weight="normal" font-size="17" fill="#000" stroke="#000" stroke-width="0.2" text-anchor="middle">V</text><rect x="592" y="278.5" width="2" height="12" fill="#000"/><text x="542.5" y="234.5" style='font-family:"Liberation Mono","DejaVu Sans Mono",monospace' font-weight="bold" font-size="19" fill="#000" stroke="#000" stroke-width="0" text-anchor="start" textLength="46" lengthAdjust="spacingAndGlyphs">XWM2</text><rect x="391" y="336" width="14" height="2" fill="#000"/><rect x="444" y="336" width="14" height="2" fill="#000"/><path d="M404 337 L407.5 331 L414 343 L420.5 331 L427 343 L433.5 331 L440 343 L444.5 337" fill="none" stroke="#000" stroke-width="1.6" shape-rendering="auto" stroke-linejoin="miter"/><text x="410.5" y="323.7" style='font-family:"Liberation Sans","DejaVu Sans",sans-serif' font-weight="bold" font-size="19.5" fill="#000" stroke="#000" stroke-width="0.5" text-anchor="start" textLength="26" lengthAdjust="spacingAndGlyphs">R2</text><text x="401" y="364.3" style='font-family:"Liberation Sans","DejaVu Sans",sans-serif' font-weight="bold" font-size="19.5" fill="#000" stroke="#000" stroke-width="0.5" text-anchor="start" textLength="44.5" lengthAdjust="spacingAndGlyphs">0.1Ω</text><rect x="362" y="377" width="2" height="14" fill="#000"/><rect x="345" y="390" width="37" height="2" fill="#000"/><rect x="354" y="399" width="19" height="2" fill="#000"/><rect x="345" y="408" width="37" height="2" fill="#000"/><rect x="354" y="417" width="19" height="2" fill="#000"/><rect x="362" y="418" width="2" height="13" fill="#000"/><rect x="362" y="445" width="2" height="13" fill="#000"/><rect x="350" y="457" width="28" height="2" fill="#000"/><rect x="355" y="462" width="19" height="2" fill="#000"/><rect x="360" y="466" width="10" height="2" fill="#000"/><text x="384" y="391.7" style='font-family:"Liberation Sans","DejaVu Sans",sans-serif' font-weight="bold" font-size="19.5" fill="#000" stroke="#000" stroke-width="0.5" text-anchor="start" textLength="23" lengthAdjust="spacingAndGlyphs">V1</text><text x="384.5" y="412.3" style='font-family:"Liberation Sans","DejaVu Sans",sans-serif' font-weight="bold" font-size="19.5" fill="#000" stroke="#000" stroke-width="0.5" text-anchor="start" textLength="41" lengthAdjust="spacingAndGlyphs">60 V</text><rect x="551" y="445" width="2" height="13" fill="#000"/><rect x="539" y="457" width="28" height="2" fill="#000"/><rect x="544" y="462" width="19" height="2" fill="#000"/><rect x="549" y="466" width="10" height="2" fill="#000"/><rect x="605" y="472" width="2" height="34" fill="#000"/><rect x="594" y="505" width="25" height="2" fill="#000"/><path d="M606 506.5 L593 526.5 H619 Z" fill="#000" shape-rendering="auto"/><rect x="605" y="526" width="2" height="27" fill="#000"/><text x="619" y="499.6" style='font-family:"Liberation Sans","DejaVu Sans",sans-serif' font-weight="bold" font-size="19.5" fill="#000" stroke="#000" stroke-width="0.5" text-anchor="start" textLength="25.5" lengthAdjust="spacingAndGlyphs">D1</text><text x="619" y="521" style='font-family:"Liberation Sans","DejaVu Sans",sans-serif' font-weight="bold" font-size="19.5" fill="#000" stroke="#000" stroke-width="0.5" text-anchor="start">D</text><text x="825" y="504.5" style='font-family:"Liberation Mono","DejaVu Sans Mono",monospace' font-weight="bold" font-size="19" fill="#000" stroke="#000" stroke-width="0" text-anchor="start" textLength="46" lengthAdjust="spacingAndGlyphs">XWM1</text><rect x="241" y="701" width="2" height="14" fill="#000"/><rect x="229" y="714" width="28" height="2" fill="#000"/><rect x="234" y="719" width="19" height="2" fill="#000"/><rect x="239" y="723" width="10" height="2" fill="#000"/><rect x="416" y="715" width="2" height="14" fill="#000"/><circle cx="417" cy="754.7" r="26.2" fill="none" stroke="#000" stroke-width="1.8" shape-rendering="auto"/><rect x="416" y="781" width="2" height="28" fill="#000"/><rect x="404" y="808" width="28" height="2" fill="#000"/><rect x="409" y="813" width="19" height="2" fill="#000"/><rect x="414" y="817" width="10" height="2" fill="#000"/><path d="M412 737.5 H423 M417.5 732 V743" stroke="#000" stroke-width="2" fill="none"/><path d="M408 761 V751.5 H417 V760 H426 V751" stroke="#000" stroke-width="2" fill="none"/><text x="447.5" y="718.4" style='font-family:"Liberation Sans","DejaVu Sans",sans-serif' font-weight="bold" font-size="19.5" fill="#000" stroke="#000" stroke-width="0.5" text-anchor="start" textLength="24" lengthAdjust="spacingAndGlyphs">V3</text><text x="447" y="751.8" style='font-family:"Liberation Sans","DejaVu Sans",sans-serif' font-weight="bold" font-size="19.5" fill="#000" stroke="#000" stroke-width="0.5" text-anchor="start" textLength="57" lengthAdjust="spacingAndGlyphs">10kHz</text><text x="447.5" y="775.8" style='font-family:"Liberation Sans","DejaVu Sans",sans-serif' font-weight="bold" font-size="19.5" fill="#000" stroke="#000" stroke-width="0.5" text-anchor="start" textLength="41" lengthAdjust="spacingAndGlyphs">20 V</text><rect x="605" y="661" width="2" height="41" fill="#0000c8"/><rect x="588" y="700" width="19" height="2" fill="#0000c8"/><rect x="587" y="697" width="2" height="9" fill="#0000c8"/><rect x="587" y="710" width="2" height="10" fill="#0000c8"/><rect x="587" y="724" width="2" height="10" fill="#0000c8"/><rect x="583" y="700" width="2" height="29" fill="#0000c8"/><rect x="566" y="727" width="19" height="2" fill="#0000c8"/><rect x="588" y="714" width="19" height="2" fill="#0000c8"/><rect x="588" y="727" width="19" height="2" fill="#0000c8"/><rect x="605" y="714" width="2" height="55" fill="#0000c8"/><path d="M590.5 715 L597 711 V719 Z" fill="#0000c8" shape-rendering="auto"/><text x="609.5" y="682.6" style='font-family:"Liberation Sans","DejaVu Sans",sans-serif' font-weight="bold" font-size="19.5" fill="#0000c8" stroke="#0000c8" stroke-width="0.5" text-anchor="start" textLength="16" lengthAdjust="spacingAndGlyphs">Q</text><text x="609.5" y="763.5" style='font-family:"Liberation Sans","DejaVu Sans",sans-serif' font-weight="bold" font-size="19.5" fill="#0000c8" stroke="#0000c8" stroke-width="0.5" text-anchor="start" textLength="17.5" lengthAdjust="spacingAndGlyphs">IR</text><rect x="605" y="796" width="2" height="13" fill="#000"/><rect x="593" y="808" width="28" height="2" fill="#000"/><rect x="598" y="813" width="19" height="2" fill="#000"/><rect x="603" y="817" width="10" height="2" fill="#000"/><circle cx="363" cy="337" r="3.4" fill="#ff0000" shape-rendering="auto"/><circle cx="471" cy="337" r="3.4" fill="#ff0000" shape-rendering="auto"/><circle cx="525" cy="337" r="3.4" fill="#ff0000" shape-rendering="auto"/><circle cx="606" cy="607" r="3.4" fill="#ff0000" shape-rendering="auto"/><circle cx="606" cy="647" r="3.4" fill="#ff0000" shape-rendering="auto"/></g></svg>
<div class="a" style="left:1231px;top:107px;width:16px;height:821px;background:repeating-conic-gradient(#fff 0% 25%,#d4d0c8 0% 50%) 0 0/2px 2px"></div><div class="rb" style="left:1231px;top:107px;width:16px;height:16px"></div><svg class="a" style="left:1235px;top:113px" width="7" height="4" viewBox="0 0 7 4"><path d="M0 4 H7 L3.5 0 Z" fill="#000"/></svg><div class="rb" style="left:1231px;top:123px;width:16px;height:600px"></div><div class="rb" style="left:1231px;top:912px;width:16px;height:16px"></div><svg class="a" style="left:1235px;top:918px" width="7" height="4" viewBox="0 0 7 4"><path d="M0 0 H7 L3.5 4 Z" fill="#000"/></svg><div class="a" style="left:6px;top:928px;width:1225px;height:16px;background:repeating-conic-gradient(#fff 0% 25%,#d4d0c8 0% 50%) 0 0/2px 2px"></div><div class="rb" style="left:6px;top:928px;width:16px;height:16px"></div><svg class="a" style="left:11px;top:932px" width="4" height="7" viewBox="0 0 4 7"><path d="M4 0 V7 L0 3.5 Z" fill="#000"/></svg><div class="rb" style="left:62px;top:928px;width:1123px;height:16px"></div><div class="rb" style="left:1215px;top:928px;width:16px;height:16px"></div><svg class="a" style="left:1221px;top:932px" width="4" height="7" viewBox="0 0 4 7"><path d="M0 0 V7 L4 3.5 Z" fill="#000"/></svg><div class="a" style="left:1231px;top:928px;width:16px;height:16px;background:#d4d0c8"></div>
<div class="a" style="left:1253px;top:101px;width:27px;height:510px;border:1px solid;border-color:#fff #808080 #808080 #fff"></div><div class="a" style="left:1255px;top:104px;width:23px;height:4px;border:1px solid;border-color:#fff #808080 #808080 #fff;border-top-width:2px"></div><div class="a" style="left:1255px;top:109px;width:23px;height:4px;border:1px solid;border-color:#fff #808080 #808080 #fff;border-top-width:2px"></div><svg class="a" style="left:1257px;top:117px" width="16" height="16" viewBox="0 0 16 16"><rect x="6" y="1" width="6" height="5" fill="#40d0f0"/><path d="M2 5 V13 C3 16 7 15 7 12" fill="none" stroke="#000" stroke-width="1.6"/><path d="M14.5 5 V13 C13 16 10 15 10 13" fill="none" stroke="#e02020" stroke-width="1.6"/><rect x="5.5" y="5" width="6" height="8" fill="#e8e8e8" stroke="#606060"/><circle cx="8.5" cy="9" r="2" fill="#000"/><path d="M1 3 V6 M15 3 V6" stroke="#e0e000" stroke-width="1.5"/></svg><svg class="a" style="left:1257px;top:139px" width="16" height="16" viewBox="0 0 16 16"><rect x="1" y="2" width="14" height="13" fill="#f4f4f4"/><path d="M1 15.2 H15.2 V2" fill="none" stroke="#a0a0a0" stroke-width="0.8"/><rect x="1.5" y="2.5" width="13" height="6" fill="#18a838"/><path d="M2.5 6.5 L4.5 4 L6.5 6.5 L8.5 4 L10.5 6.5 L12.5 4 L13.5 5.5" fill="none" stroke="#000" stroke-width="1"/><path d="M3 12.5 H5 M6.5 12.5 H8.5 M10 12.5 H12 M4 11.3 V13.7 M7.5 11.3 V13.7 M11 11.3 V13.7" stroke="#000" stroke-width="1.3"/></svg><svg class="a" style="left:1257px;top:161px" width="16" height="16" viewBox="0 0 16 16"><rect x="1.5" y="2.5" width="5" height="5" fill="#fff" stroke="#000"/><rect x="9.5" y="2.5" width="5" height="5" fill="#fff" stroke="#000"/><path d="M3 6 L5 4 M11 4 L13 6" stroke="#000"/><path d="M2 11.5 H6 M10 11.5 H14" stroke="#000" stroke-width="1.5"/><rect x="1" y="9" width="14" height="5" fill="none" stroke="#a0a0a0"/></svg><svg class="a" style="left:1257px;top:183px" width="16" height="16" viewBox="0 0 16 16"><rect x="1" y="2" width="14" height="13" fill="#f4f4f4"/><path d="M1 15.2 H15.2 V2" fill="none" stroke="#a0a0a0" stroke-width="0.8"/><rect x="1.5" y="2.5" width="13" height="6" fill="#d8b0e0"/><path d="M2.5 5 L4.5 3.5 L6.5 5 L8.5 3.5 L10.5 5 L12.5 3.5 M2.5 7.5 L4.5 6 L6.5 7.5 L8.5 6 L10.5 7.5 L12.5 6" fill="none" stroke="#3040c0" stroke-width="0.9"/><path d="M3 12.5 H5 M6.5 12.5 H8.5 M10 12.5 H12 M4 11.3 V13.7 M7.5 11.3 V13.7 M11 11.3 V13.7" stroke="#000" stroke-width="1.3"/></svg><svg class="a" style="left:1257px;top:205px" width="16" height="16" viewBox="0 0 16 16"><rect x="1" y="2" width="14" height="13" fill="#f4f4f4"/><path d="M1 15.2 H15.2 V2" fill="none" stroke="#a0a0a0" stroke-width="0.8"/><rect x="1.5" y="2.5" width="13" height="6" fill="#e0a0a0"/><path d="M2.5 5 L4.5 3.5 L6.5 5 L8.5 3.5 L10.5 5 L12.5 3.5 M2.5 7.5 L4.5 6 L6.5 7.5 L8.5 6 L10.5 7.5 L12.5 6" fill="none" stroke="#3040c0" stroke-width="0.9"/><path d="M3 12.5 H5 M6.5 12.5 H8.5 M10 12.5 H12 M4 11.3 V13.7 M7.5 11.3 V13.7 M11 11.3 V13.7" stroke="#000" stroke-width="1.3"/></svg><svg class="a" style="left:1257px;top:227px" width="16" height="16" viewBox="0 0 16 16"><rect x="1" y="2" width="14" height="13" fill="#f4f4f4"/><path d="M1 15.2 H15.2 V2" fill="none" stroke="#a0a0a0" stroke-width="0.8"/><rect x="1.5" y="2.5" width="13" height="6" fill="#104828"/><path d="M3 4 H7 L9 6 L7 8 H3 Z" fill="none" stroke="#40e0e0" stroke-width="1"/><path d="M3 12.5 H5 M6.5 12.5 H8.5 M10 12.5 H12 M4 11.3 V13.7 M7.5 11.3 V13.7 M11 11.3 V13.7" stroke="#000" stroke-width="1.3"/></svg><svg class="a" style="left:1257px;top:249px" width="16" height="16" viewBox="0 0 16 16"><rect x="1" y="2" width="14" height="13" fill="#f4f4f4"/><path d="M1 15.2 H15.2 V2" fill="none" stroke="#a0a0a0" stroke-width="0.8"/><rect x="1.5" y="2.5" width="13" height="6" fill="#000"/><text x="8" y="8.2" text-anchor="middle" font-family="Liberation Mono,monospace" font-weight="bold" font-size="7" fill="#40ff60">123</text><path d="M3 12.5 H5 M6.5 12.5 H8.5 M10 12.5 H12 M4 11.3 V13.7 M7.5 11.3 V13.7 M11 11.3 V13.7" stroke="#000" stroke-width="1.3"/></svg><svg class="a" style="left:1257px;top:271px" width="16" height="16" viewBox="0 0 16 16"><rect x="1" y="2" width="14" height="13" fill="#f4f4f4"/><path d="M1 15.2 H15.2 V2" fill="none" stroke="#a0a0a0" stroke-width="0.8"/><rect x="1.5" y="2.5" width="13" height="6" fill="#000"/><text x="8" y="8.2" text-anchor="middle" font-family="Liberation Mono,monospace" font-weight="bold" font-size="7" fill="#40ff60">1010</text><path d="M3 12.5 H5 M6.5 12.5 H8.5 M10 12.5 H12 M4 11.3 V13.7 M7.5 11.3 V13.7 M11 11.3 V13.7" stroke="#000" stroke-width="1.3"/></svg><svg class="a" style="left:1257px;top:293px" width="16" height="16" viewBox="0 0 16 16"><rect x="1" y="2" width="14" height="13" fill="#f4f4f4"/><path d="M1 15.2 H15.2 V2" fill="none" stroke="#a0a0a0" stroke-width="0.8"/><rect x="1.5" y="2.5" width="13" height="6" fill="#104828"/><rect x="3" y="3" width="10" height="3" fill="#e02060"/><path d="M3 8 L5 7 L7 8 L9 7 L11 8 L13 7" stroke="#40e0e0" fill="none"/><path d="M3 12.5 H5 M6.5 12.5 H8.5 M10 12.5 H12 M4 11.3 V13.7 M7.5 11.3 V13.7 M11 11.3 V13.7" stroke="#000" stroke-width="1.3"/></svg><svg class="a" style="left:1257px;top:315px" width="16" height="16" viewBox="0 0 16 16"><rect x="1" y="2" width="14" height="13" fill="#f4f4f4"/><path d="M1 15.2 H15.2 V2" fill="none" stroke="#a0a0a0" stroke-width="0.8"/><rect x="1.5" y="2.5" width="13" height="6" fill="#000"/><path d="M3 4 H7 L9 6 L7 8 H3 Z" fill="none" stroke="#40e0e0" stroke-width="1"/><path d="M3 12.5 H5 M6.5 12.5 H8.5 M10 12.5 H12 M4 11.3 V13.7 M7.5 11.3 V13.7 M11 11.3 V13.7" stroke="#000" stroke-width="1.3"/></svg><svg class="a" style="left:1257px;top:337px" width="16" height="16" viewBox="0 0 16 16"><rect x="1" y="2" width="14" height="13" fill="#f4f4f4"/><path d="M1 15.2 H15.2 V2" fill="none" stroke="#a0a0a0" stroke-width="0.8"/><rect x="1.5" y="2.5" width="13" height="6" fill="#203880"/><path d="M2.5 5 L4.5 3.5 L6.5 5 L8.5 3.5 L10.5 5 L12.5 3.5 M2.5 7.5 L4.5 6 L6.5 7.5 L8.5 6 L10.5 7.5 L12.5 6" fill="none" stroke="#3040c0" stroke-width="0.9"/><path d="M3 12.5 H5 M6.5 12.5 H8.5 M10 12.5 H12 M4 11.3 V13.7 M7.5 11.3 V13.7 M11 11.3 V13.7" stroke="#000" stroke-width="1.3"/></svg><svg class="a" style="left:1257px;top:359px" width="16" height="16" viewBox="0 0 16 16"><rect x="1" y="2" width="14" height="13" fill="#f4f4f4"/><path d="M1 15.2 H15.2 V2" fill="none" stroke="#a0a0a0" stroke-width="0.8"/><rect x="1.5" y="2.5" width="13" height="6" fill="#000"/><text x="8" y="8.2" text-anchor="middle" font-family="Liberation Mono,monospace" font-weight="bold" font-size="7" fill="#40ff60">.09</text><path d="M3 12.5 H5 M6.5 12.5 H8.5 M10 12.5 H12 M4 11.3 V13.7 M7.5 11.3 V13.7 M11 11.3 V13.7" stroke="#000" stroke-width="1.3"/></svg><svg class="a" style="left:1257px;top:381px" width="16" height="16" viewBox="0 0 16 16"><rect x="1" y="2" width="14" height="13" fill="#f4f4f4"/><path d="M1 15.2 H15.2 V2" fill="none" stroke="#a0a0a0" stroke-width="0.8"/><rect x="1.5" y="2.5" width="13" height="6" fill="#000"/><text x="8" y="8.2" text-anchor="middle" font-family="Liberation Mono,monospace" font-weight="bold" font-size="7" fill="#40ff60">|||</text><path d="M3 12.5 H5 M6.5 12.5 H8.5 M10 12.5 H12 M4 11.3 V13.7 M7.5 11.3 V13.7 M11 11.3 V13.7" stroke="#000" stroke-width="1.3"/></svg><svg class="a" style="left:1257px;top:403px" width="16" height="16" viewBox="0 0 16 16"><rect x="1" y="2" width="14" height="13" fill="#f4f4f4"/><path d="M1 15.2 H15.2 V2" fill="none" stroke="#a0a0a0" stroke-width="0.8"/><rect x="1.5" y="2.5" width="13" height="6" fill="#18a838"/><text x="8" y="8.2" text-anchor="middle" font-family="Liberation Mono,monospace" font-weight="bold" font-size="7" fill="#40ff60">2%</text><path d="M3 12.5 H5 M6.5 12.5 H8.5 M10 12.5 H12 M4 11.3 V13.7 M7.5 11.3 V13.7 M11 11.3 V13.7" stroke="#000" stroke-width="1.3"/></svg><svg class="a" style="left:1257px;top:425px" width="16" height="16" viewBox="0 0 16 16"><rect x="1" y="2" width="14" height="13" fill="#f4f4f4"/><path d="M1 15.2 H15.2 V2" fill="none" stroke="#a0a0a0" stroke-width="0.8"/><rect x="1.5" y="2.5" width="13" height="6" fill="#18a838"/><path d="M2.5 6.5 L4.5 4 L6.5 6.5 L8.5 4 L10.5 6.5 L12.5 4 L13.5 5.5" fill="none" stroke="#000" stroke-width="1"/><path d="M3 12.5 H5 M6.5 12.5 H8.5 M10 12.5 H12 M4 11.3 V13.7 M7.5 11.3 V13.7 M11 11.3 V13.7" stroke="#000" stroke-width="1.3"/><text x="1" y="15" font-family="Liberation Sans,sans-serif" font-weight="bold" font-size="8" fill="#1010d0">AG</text></svg><svg class="a" style="left:1257px;top:447px" width="16" height="16" viewBox="0 0 16 16"><rect x="1" y="2" width="14" height="13" fill="#f4f4f4"/><path d="M1 15.2 H15.2 V2" fill="none" stroke="#a0a0a0" stroke-width="0.8"/><rect x="1.5" y="2.5" width="13" height="6" fill="#fff"/><path d="M3 12.5 H5 M6.5 12.5 H8.5 M10 12.5 H12 M4 11.3 V13.7 M7.5 11.3 V13.7 M11 11.3 V13.7" stroke="#000" stroke-width="1.3"/><text x="1" y="15" font-family="Liberation Sans,sans-serif" font-weight="bold" font-size="8" fill="#1010d0">AG</text></svg><svg class="a" style="left:1257px;top:469px" width="16" height="16" viewBox="0 0 16 16"><rect x="1" y="2" width="14" height="13" fill="#f4f4f4"/><path d="M1 15.2 H15.2 V2" fill="none" stroke="#a0a0a0" stroke-width="0.8"/><rect x="1.5" y="2.5" width="13" height="6" fill="#d8b0e0"/><path d="M2.5 5 L4.5 3.5 L6.5 5 L8.5 3.5 L10.5 5 L12.5 3.5 M2.5 7.5 L4.5 6 L6.5 7.5 L8.5 6 L10.5 7.5 L12.5 6" fill="none" stroke="#3040c0" stroke-width="0.9"/><path d="M3 12.5 H5 M6.5 12.5 H8.5 M10 12.5 H12 M4 11.3 V13.7 M7.5 11.3 V13.7 M11 11.3 V13.7" stroke="#000" stroke-width="1.3"/><text x="1" y="15" font-family="Liberation Sans,sans-serif" font-weight="bold" font-size="8" fill="#1010d0">AG</text></svg><svg class="a" style="left:1257px;top:491px" width="16" height="16" viewBox="0 0 16 16"><rect x="1" y="2" width="14" height="13" fill="#f4f4f4"/><path d="M1 15.2 H15.2 V2" fill="none" stroke="#a0a0a0" stroke-width="0.8"/><rect x="1.5" y="2.5" width="13" height="6" fill="#d8b0e0"/><path d="M2.5 5 L4.5 3.5 L6.5 5 L8.5 3.5 L10.5 5 L12.5 3.5 M2.5 7.5 L4.5 6 L6.5 7.5 L8.5 6 L10.5 7.5 L12.5 6" fill="none" stroke="#3040c0" stroke-width="0.9"/><path d="M3 12.5 H5 M6.5 12.5 H8.5 M10 12.5 H12 M4 11.3 V13.7 M7.5 11.3 V13.7 M11 11.3 V13.7" stroke="#000" stroke-width="1.3"/></svg><div class="a" style="left:1256px;top:513px;width:22px;height:2px;border-top:1px solid #808080;border-bottom:1px solid #fff"></div><svg class="a" style="left:1257px;top:521px" width="16" height="16" viewBox="0 0 16 16"><path d="M1 3 L3 1 H6 V3 H15 V11 C15 13 13 14 12 14 H3 C2 14 1 13 1 12 Z" fill="#f0f020" stroke="#606000"/><text x="8" y="12" text-anchor="middle" font-family="Liberation Sans,sans-serif" font-weight="bold" font-size="7.5" fill="#000">1.4v</text></svg><svg class="a" style="left:1264px;top:542px" width="3" height="6" viewBox="0 0 3 6"><path d="M0 0 V6 L3 3.0 Z" fill="#000"/></svg><svg class="a" style="left:1257px;top:555px" width="16" height="16" viewBox="0 0 16 16"><rect x="2" y="1" width="12" height="14" fill="#202020"/><path d="M0 8 H16" stroke="#e02020" stroke-width="1.4"/><path d="M5 4 L11 8 L5 12 Z" fill="#f0f020" stroke="#000"/><path d="M2 3 H14 M2 13 H14" stroke="#20a0a0" stroke-dasharray="1 1"/></svg><svg class="a" style="left:1264px;top:576px" width="3" height="6" viewBox="0 0 3 6"><path d="M0 0 V6 L3 3.0 Z" fill="#000"/></svg><svg class="a" style="left:1257px;top:589px" width="16" height="16" viewBox="0 0 16 16"><ellipse cx="5.5" cy="10" rx="4" ry="5" fill="none" stroke="#a00c18" stroke-width="2.6" transform="rotate(25 5.5 10)"/><path d="M8 8 L14 2 M9 11 L15 9 M11 6 L13 10" stroke="#000" stroke-width="1.4" fill="none"/></svg>
<svg class="a" style="left:2px;top:951px" width="78" height="26" viewBox="0 0 78 26"><path d="M1 0 H74 V20.5 L71.5 23 H4 L1 20.5 Z" fill="#d4d0c8"/><path d="M1.5 0 V20.5 L4 23" fill="none" stroke="#fff" stroke-width="1"/><path d="M3.5 23.2 H72 L74.5 20.6 V0" fill="none" stroke="#202020" stroke-width="1.3"/><path d="M4 22 H71.5 L73.3 20.2 V1" fill="none" stroke="#808080" stroke-width="1"/></svg><svg class="a" style="left:7px;top:955px" width="17" height="17" viewBox="0 0 17 17"><path d="M0.5 0.5 H10.5 L15.5 5.5 V15.5 H0.5 Z" fill="#fff" stroke="#000" stroke-width="1"/><path d="M10.5 0.5 V5.5 H15.5" fill="none" stroke="#000" stroke-width="1"/><path d="M2.5 4.5 H5 M2.5 4.5 V11.5 H5 M8 6 V11.5 H6" fill="none" stroke="#b00030" stroke-width="1"/><path d="M4.5 2.5 H6.5 L8 4 L6.5 5.5 H4.5 Z" fill="#fff" stroke="#000" stroke-width="1"/><path d="M4 10 L7 13 M7 10 L4 13 M3 13.5 H5" stroke="#000" stroke-width="1" fill="none"/></svg><div class="t " style="left:27px;top:957px;">Circuit1 *</div><div class="rb" style="left:1220px;top:957px;width:15px;height:15px"></div><svg class="a" style="left:1225px;top:961px" width="4" height="7" viewBox="0 0 4 7"><path d="M4 0 V7 L0 3.5 Z" fill="#000080"/></svg><div class="rb" style="left:1235px;top:957px;width:15px;height:15px"></div><svg class="a" style="left:1240px;top:961px" width="4" height="7" viewBox="0 0 4 7"><path d="M0 0 V7 L4 3.5 Z" fill="#000080"/></svg>
<div class="sk1" style="left:694px;top:978px;width:156px;height:16px"></div><div class="sk1" style="left:852px;top:978px;width:182px;height:16px"></div><div class="sk1" style="left:1035px;top:978px;width:181px;height:16px"></div><div class="sk1" style="left:1217px;top:978px;width:62px;height:16px"></div><div class="t " style="left:697px;top:980px;">-</div><div class="t " style="left:1037px;top:980px;">Tran: 0.071 s</div><div class="a" style="left:1221px;top:981px;width:6px;height:10px;border:1px solid;border-color:#808080 #fff #fff #808080"></div><div class="a" style="left:1229px;top:981px;width:6px;height:10px;border:1px solid;border-color:#808080 #fff #fff #808080"></div><div class="a" style="left:1237px;top:981px;width:6px;height:10px;border:1px solid;border-color:#808080 #fff #fff #808080"></div><div class="a" style="left:1245px;top:981px;width:6px;height:10px;border:1px solid;border-color:#808080 #fff #fff #808080"></div><div class="a" style="left:1253px;top:981px;width:6px;height:10px;border:1px solid;border-color:#808080 #fff #fff #808080"></div><div class="a" style="left:1261px;top:981px;width:6px;height:10px;border:1px solid;border-color:#808080 #fff #fff #808080"></div><div class="a" style="left:1269px;top:981px;width:6px;height:10px;border:1px solid;border-color:#808080 #fff #fff #808080"></div>
<div class="a" style="left:0;top:996px;width:1280px;height:28px;background:#d4d0c8;border-top:1px solid #fff"></div><div class="a" style="left:0;top:995px;width:1280px;height:1px;background:#d4d0c8"></div><div class="rb" style="left:2px;top:998px;width:51px;height:22px"></div><svg class="a" style="left:5px;top:1001px" width="16" height="16" viewBox="0 0 16 16"><path d="M1 3 Q4 1 7 3 V7.5 Q4 5.5 1 7.5 Z" fill="#e04020"/><path d="M8 3.2 Q11 5 14.5 3 V7.5 Q11 9.5 8 7.8 Z" fill="#30a030"/><path d="M1 8.8 Q4 6.8 7 8.8 V13.5 Q4 11.5 1 13.5 Z" fill="#2060d0"/><path d="M8 9 Q11 11 14.5 9 V13.5 Q11 15.5 8 13.8 Z" fill="#f0c020"/></svg><div class="t " style="left:22px;top:1003px;transform:scaleX(1.1429);transform-origin:0 0;font-weight:bold;-webkit-text-stroke:0;">Пуск</div><div class="a" style="left:60px;top:1000px;width:2px;height:18px;border-left:1px solid #fff;border-right:1px solid #808080"></div><div class="a" style="left:146px;top:1000px;width:2px;height:18px;border-left:1px solid #fff;border-right:1px solid #808080"></div><svg class="a" style="left:69px;top:1001px" width="16" height="16" viewBox="0 0 16 16"><rect x="1.5" y="2.5" width="13" height="11" rx="2.5" fill="#58a0e8" stroke="#2050a0" transform="rotate(-8 8 8)"/><path d="M5 8.5 C5 5 10 4.5 11 7 M11 7 H6 V10 C7 12 10 11.5 11 10" fill="none" stroke="#fff" stroke-width="1.3"/></svg><svg class="a" style="left:92px;top:1001px" width="16" height="16" viewBox="0 0 16 16"><rect x="1.5" y="2.5" width="10" height="12" fill="#fff" stroke="#808080"/><rect x="2.5" y="8" width="8" height="6" fill="#50b040"/><path d="M13.5 1.5 L8 10" stroke="#a06020" stroke-width="2"/><path d="M2 4 H11" stroke="#a0a0a0" stroke-dasharray="1 1"/></svg><svg class="a" style="left:115px;top:1001px" width="16" height="16" viewBox="0 0 16 16"><circle cx="8" cy="8" r="6" fill="#fff" stroke="#e07020" stroke-width="2.2"/><path d="M2 8 A6 6 0 0 0 8 14" fill="none" stroke="#2060c0" stroke-width="2.2"/><path d="M8 14 A6 6 0 0 0 14 8" fill="none" stroke="#40a040" stroke-width="2.2"/><path d="M6 5 L11 8 L6 11 Z" fill="#2040a0"/></svg><div class="rb" style="left:152px;top:998px;width:160px;height:22px;"></div><svg class="a" style="left:156px;top:1001px" width="16" height="16" viewBox="0 0 16 16"><path d="M1.5 3.5 H6 L7.5 5 H14.5 V13.5 H1.5 Z" fill="#f8e080" stroke="#907020"/><path d="M1.5 6.5 H14.5" stroke="#fff8c0"/></svg><div class="t " style="left:176px;top:1003px;">Z:\del\pwm</div><div class="pb" style="left:315px;top:998px;width:160px;height:22px;background:repeating-conic-gradient(#fff 0% 25%,#d4d0c8 0% 50%) 0 0/2px 2px"></div><svg class="a" style="left:320px;top:1002px" width="16" height="16" viewBox="0 0 16 16"><path d="M0.5 7.5 L7 2.5 L15.5 5.5 L8.5 12.8 Z" fill="#18187c"/><g stroke="#fff" stroke-width="1.1" stroke-dasharray="1.1 1.2" fill="none"><path d="M2.2 8.3 L8.2 3.6"/><path d="M4.2 9.5 L10.6 4.4"/><path d="M6.2 10.7 L12.8 5.3"/><path d="M8.2 11.8 L14.6 6.2"/></g></svg><div class="t " style="left:339px;top:1004px;transform:scaleX(1.0851);transform-origin:0 0;font-weight:bold;-webkit-text-stroke:0;">Circuit1 - Multisim - [...</div><div class="rb" style="left:478px;top:998px;width:160px;height:22px;"></div><svg class="a" style="left:482px;top:1001px" width="16" height="16" viewBox="0 0 16 16"><rect x="3.5" y="1.5" width="9" height="13" rx="1" fill="#90b0e8" stroke="#5070b0"/><rect x="5" y="3" width="6" height="3" fill="#e8f0ff"/><path d="M5.5 8 H7 M9 8 H10.5 M5.5 10.5 H7 M9 10.5 H10.5 M5.5 13 H7 M9 13 H10.5" stroke="#fff" stroke-width="1.2"/></svg><div class="t " style="left:502px;top:1003px;">Калькулятор</div><div class="rb" style="left:641px;top:998px;width:160px;height:22px;"></div><svg class="a" style="left:645px;top:1001px" width="16" height="16" viewBox="0 0 16 16"><rect x="2" y="7" width="12" height="8" fill="#f0c040" stroke="#906010"/><rect x="4" y="1.5" width="8" height="8" fill="#fff" stroke="#6080c0"/><rect x="6" y="3" width="4" height="4" fill="#e04060"/><rect x="5" y="10" width="6" height="3" fill="#fff8d0"/></svg><div class="t " style="left:665px;top:1003px;">C:\Documents and Settin...</div><div class="rb" style="left:804px;top:998px;width:160px;height:22px;"></div><svg class="a" style="left:808px;top:1001px" width="16" height="16" viewBox="0 0 16 16"><path d="M1.5 3.5 H6 L7.5 5 H14.5 V13.5 H1.5 Z" fill="#f8e080" stroke="#907020"/><path d="M1.5 6.5 H14.5" stroke="#fff8c0"/></svg><div class="t " style="left:828px;top:1003px;">Z:\del\pwm\scr</div><div class="a" style="left:1154px;top:1000px;width:2px;height:18px;border-left:1px solid #fff;border-right:1px solid #808080"></div><div class="sk1" style="left:1198px;top:998px;width:80px;height:22px"></div><svg class="a" style="left:1201px;top:1001px" width="16" height="16" viewBox="0 0 16 16"><circle cx="7" cy="7" r="5" fill="#909090" stroke="#505050" stroke-width="1.5"/><circle cx="6" cy="6" r="2" fill="#d0d0d0"/><path d="M11 10 C13 11 13.5 13 12 15" fill="none" stroke="#8080d0" stroke-width="1"/></svg><svg class="a" style="left:1219px;top:1001px" width="16" height="16" viewBox="0 0 16 16"><path d="M8 1 L14 4 V11 L8 15 L2 11 V4 Z" fill="#3060c0" stroke="#183880"/><path d="M8 1 L14 4 L8 7.5 L2 4 Z" fill="#a0c8f0"/><path d="M8 7.5 V15" stroke="#183880"/><path d="M11 10 L12 12 L14 12.3 L12.5 13.7 L13 15.8 L11 14.7 L9 15.8 L9.5 13.7 L8 12.3 L10 12 Z" fill="#f0c020"/></svg><div class="t " style="left:1245px;top:1003px;">3:37</div>
<div class="win" style="left:628px;top:177px;width:182px;height:152px"><div class="a" style="left:3px;top:3px;width:174px;height:18px;background:linear-gradient(to right,#808080,#c0c0c0)"></div><svg class="a" style="left:4px;top:4px" width="16" height="16" viewBox="0 0 16 16"><path d="M0.5 7.5 L7 2.5 L15.5 5.5 L8.5 12.8 Z" fill="#18187c"/><g stroke="#fff" stroke-width="1.1" stroke-dasharray="1.1 1.2" fill="none"><path d="M2.2 8.3 L8.2 3.6"/><path d="M4.2 9.5 L10.6 4.4"/><path d="M6.2 10.7 L12.8 5.3"/><path d="M8.2 11.8 L14.6 6.2"/></g></svg><div class="t " style="left:23px;top:6px;transform:scaleX(1.1383);transform-origin:0 0;font-weight:bold;-webkit-text-stroke:0;color:#d4d0c8">Wattmeter-XWM2</div><div class="rb" style="left:159px;top:5px;width:16px;height:14px"><svg class="a" style="left:0;top:0" width="14" height="12" viewBox="0 0 14 12" ><path d="M3.5 2.5 L10.5 8.5 M10.5 2.5 L3.5 8.5" stroke="#000" stroke-width="1.5" fill="none"/></svg></div><div class="a" style="left:4px;top:26px;width:171px;height:31px;border:2px solid;border-color:#808080 #fff #fff #808080;background:#d4d0c8;padding:1px"><div style="width:100%;height:100%;background:#000;border:1px solid;border-color:#404040 #808080 #808080 #404040"></div></div><div class="t c" style="left:7.8px;top:31px;width:170px;font-size:16px;line-height:20px;height:20px;color:#fff;-webkit-text-stroke:0">-366.130 W</div><div class="t " style="left:10px;top:66px;">Power Factor:</div><div class="a" style="left:93px;top:62px;width:81px;height:20px;border:2px solid;border-color:#808080 #fff #fff #808080;background:#000"></div><div class="t c" style="left:95px;top:66px;width:81px;color:#fff;font-size:11px;line-height:13px;height:13px;-webkit-text-stroke:0">0.841</div><div class="t " style="left:18px;top:91px;">Voltage</div><div class="t " style="left:123px;top:91px;">Current</div><div class="t c" style="left:12px;top:109px;width:12px;font-size:13px;line-height:14px;height:14px">+</div><svg class="a" style="left:11px;top:121px" width="14" height="14" viewBox="0 0 14 14"><circle cx="7" cy="7" r="5.2" fill="#d4d0c8"/><path d="M2.9 10.6 A5.4 5.4 0 0 1 10.6 2.9" fill="none" stroke="#707070" stroke-width="1.3"/><path d="M10.8 3.2 A5.4 5.4 0 0 1 3.2 10.8" fill="none" stroke="#fff" stroke-width="1.3"/><circle cx="7" cy="7" r="2" fill="#909090"/></svg><div class="t c" style="left:48px;top:109px;width:12px;font-size:13px;line-height:14px;height:14px">−</div><svg class="a" style="left:47px;top:121px" width="14" height="14" viewBox="0 0 14 14"><circle cx="7" cy="7" r="5.2" fill="#d4d0c8"/><path d="M2.9 10.6 A5.4 5.4 0 0 1 10.6 2.9" fill="none" stroke="#707070" stroke-width="1.3"/><path d="M10.8 3.2 A5.4 5.4 0 0 1 3.2 10.8" fill="none" stroke="#fff" stroke-width="1.3"/><circle cx="7" cy="7" r="2" fill="#909090"/></svg><div class="t c" style="left:117px;top:109px;width:12px;font-size:13px;line-height:14px;height:14px">+</div><svg class="a" style="left:116px;top:121px" width="14" height="14" viewBox="0 0 14 14"><circle cx="7" cy="7" r="5.2" fill="#d4d0c8"/><path d="M2.9 10.6 A5.4 5.4 0 0 1 10.6 2.9" fill="none" stroke="#707070" stroke-width="1.3"/><path d="M10.8 3.2 A5.4 5.4 0 0 1 3.2 10.8" fill="none" stroke="#fff" stroke-width="1.3"/><circle cx="7" cy="7" r="2" fill="#909090"/></svg><div class="t c" style="left:152px;top:109px;width:12px;font-size:13px;line-height:14px;height:14px">−</div><svg class="a" style="left:151px;top:121px" width="14" height="14" viewBox="0 0 14 14"><circle cx="7" cy="7" r="5.2" fill="#d4d0c8"/><path d="M2.9 10.6 A5.4 5.4 0 0 1 10.6 2.9" fill="none" stroke="#707070" stroke-width="1.3"/><path d="M10.8 3.2 A5.4 5.4 0 0 1 3.2 10.8" fill="none" stroke="#fff" stroke-width="1.3"/><circle cx="7" cy="7" r="2" fill="#909090"/></svg><svg class="a" style="left:166px;top:136px" width="12" height="12" viewBox="0 0 12 12" shape-rendering="crispEdges"><rect x="9" y="1" width="2" height="2" fill="#808080"/><rect x="10" y="2" width="1" height="1" fill="#fff"/><rect x="6" y="4" width="2" height="2" fill="#808080"/><rect x="7" y="5" width="1" height="1" fill="#fff"/><rect x="9" y="4" width="2" height="2" fill="#808080"/><rect x="10" y="5" width="1" height="1" fill="#fff"/><rect x="3" y="7" width="2" height="2" fill="#808080"/><rect x="4" y="8" width="1" height="1" fill="#fff"/><rect x="6" y="7" width="2" height="2" fill="#808080"/><rect x="7" y="8" width="1" height="1" fill="#fff"/><rect x="9" y="7" width="2" height="2" fill="#808080"/><rect x="10" y="8" width="1" height="1" fill="#fff"/><rect x="3" y="10" width="2" height="2" fill="#808080"/><rect x="4" y="11" width="1" height="1" fill="#fff"/><rect x="6" y="10" width="2" height="2" fill="#808080"/><rect x="7" y="11" width="1" height="1" fill="#fff"/><rect x="9" y="10" width="2" height="2" fill="#808080"/><rect x="10" y="11" width="1" height="1" fill="#fff"/></svg></div>
<div class="win" style="left:914px;top:433px;width:182px;height:152px"><div class="a" style="left:3px;top:3px;width:174px;height:18px;background:linear-gradient(to right,#808080,#c0c0c0)"></div><svg class="a" style="left:4px;top:4px" width="16" height="16" viewBox="0 0 16 16"><path d="M0.5 7.5 L7 2.5 L15.5 5.5 L8.5 12.8 Z" fill="#18187c"/><g stroke="#fff" stroke-width="1.1" stroke-dasharray="1.1 1.2" fill="none"><path d="M2.2 8.3 L8.2 3.6"/><path d="M4.2 9.5 L10.6 4.4"/><path d="M6.2 10.7 L12.8 5.3"/><path d="M8.2 11.8 L14.6 6.2"/></g></svg><div class="t " style="left:23px;top:6px;transform:scaleX(1.1383);transform-origin:0 0;font-weight:bold;-webkit-text-stroke:0;color:#d4d0c8">Wattmeter-XWM1</div><div class="rb" style="left:159px;top:5px;width:16px;height:14px"><svg class="a" style="left:0;top:0" width="14" height="12" viewBox="0 0 14 12" ><path d="M3.5 2.5 L10.5 8.5 M10.5 2.5 L3.5 8.5" stroke="#000" stroke-width="1.5" fill="none"/></svg></div><div class="a" style="left:4px;top:26px;width:171px;height:31px;border:2px solid;border-color:#808080 #fff #fff #808080;background:#d4d0c8;padding:1px"><div style="width:100%;height:100%;background:#000;border:1px solid;border-color:#404040 #808080 #808080 #404040"></div></div><div class="t c" style="left:11.8px;top:31px;width:170px;font-size:16px;line-height:20px;height:20px;color:#fff;-webkit-text-stroke:0">36.716 W</div><div class="t " style="left:10px;top:66px;">Power Factor:</div><div class="a" style="left:93px;top:62px;width:81px;height:20px;border:2px solid;border-color:#808080 #fff #fff #808080;background:#000"></div><div class="t c" style="left:95px;top:66px;width:81px;color:#fff;font-size:11px;line-height:13px;height:13px;-webkit-text-stroke:0">1.000</div><div class="t " style="left:18px;top:91px;">Voltage</div><div class="t " style="left:123px;top:91px;">Current</div><div class="t c" style="left:12px;top:109px;width:12px;font-size:13px;line-height:14px;height:14px">+</div><svg class="a" style="left:11px;top:121px" width="14" height="14" viewBox="0 0 14 14"><circle cx="7" cy="7" r="5.2" fill="#d4d0c8"/><path d="M2.9 10.6 A5.4 5.4 0 0 1 10.6 2.9" fill="none" stroke="#707070" stroke-width="1.3"/><path d="M10.8 3.2 A5.4 5.4 0 0 1 3.2 10.8" fill="none" stroke="#fff" stroke-width="1.3"/><circle cx="7" cy="7" r="2" fill="#909090"/></svg><div class="t c" style="left:48px;top:109px;width:12px;font-size:13px;line-height:14px;height:14px">−</div><svg class="a" style="left:47px;top:121px" width="14" height="14" viewBox="0 0 14 14"><circle cx="7" cy="7" r="5.2" fill="#d4d0c8"/><path d="M2.9 10.6 A5.4 5.4 0 0 1 10.6 2.9" fill="none" stroke="#707070" stroke-width="1.3"/><path d="M10.8 3.2 A5.4 5.4 0 0 1 3.2 10.8" fill="none" stroke="#fff" stroke-width="1.3"/><circle cx="7" cy="7" r="2" fill="#909090"/></svg><div class="t c" style="left:117px;top:109px;width:12px;font-size:13px;line-height:14px;height:14px">+</div><svg class="a" style="left:116px;top:121px" width="14" height="14" viewBox="0 0 14 14"><circle cx="7" cy="7" r="5.2" fill="#d4d0c8"/><path d="M2.9 10.6 A5.4 5.4 0 0 1 10.6 2.9" fill="none" stroke="#707070" stroke-width="1.3"/><path d="M10.8 3.2 A5.4 5.4 0 0 1 3.2 10.8" fill="none" stroke="#fff" stroke-width="1.3"/><circle cx="7" cy="7" r="2" fill="#909090"/></svg><div class="t c" style="left:152px;top:109px;width:12px;font-size:13px;line-height:14px;height:14px">−</div><svg class="a" style="left:151px;top:121px" width="14" height="14" viewBox="0 0 14 14"><circle cx="7" cy="7" r="5.2" fill="#d4d0c8"/><path d="M2.9 10.6 A5.4 5.4 0 0 1 10.6 2.9" fill="none" stroke="#707070" stroke-width="1.3"/><path d="M10.8 3.2 A5.4 5.4 0 0 1 3.2 10.8" fill="none" stroke="#fff" stroke-width="1.3"/><circle cx="7" cy="7" r="2" fill="#909090"/></svg><svg class="a" style="left:166px;top:136px" width="12" height="12" viewBox="0 0 12 12" shape-rendering="crispEdges"><rect x="9" y="1" width="2" height="2" fill="#808080"/><rect x="10" y="2" width="1" height="1" fill="#fff"/><rect x="6" y="4" width="2" height="2" fill="#808080"/><rect x="7" y="5" width="1" height="1" fill="#fff"/><rect x="9" y="4" width="2" height="2" fill="#808080"/><rect x="10" y="5" width="1" height="1" fill="#fff"/><rect x="3" y="7" width="2" height="2" fill="#808080"/><rect x="4" y="8" width="1" height="1" fill="#fff"/><rect x="6" y="7" width="2" height="2" fill="#808080"/><rect x="7" y="8" width="1" height="1" fill="#fff"/><rect x="9" y="7" width="2" height="2" fill="#808080"/><rect x="10" y="8" width="1" height="1" fill="#fff"/><rect x="3" y="10" width="2" height="2" fill="#808080"/><rect x="4" y="11" width="1" height="1" fill="#fff"/><rect x="6" y="10" width="2" height="2" fill="#808080"/><rect x="7" y="11" width="1" height="1" fill="#fff"/><rect x="9" y="10" width="2" height="2" fill="#808080"/><rect x="10" y="11" width="1" height="1" fill="#fff"/></svg></div>
<div class="win" style="left:626px;top:507px;width:561px;height:441px"></div><div class="a" style="left:630px;top:511px;width:553px;height:18px;background:linear-gradient(to right,#0a246a,#a6caf0)"></div><svg class="a" style="left:632px;top:512px" width="16" height="16" viewBox="0 0 16 16"><path d="M0.5 7.5 L7 2.5 L15.5 5.5 L8.5 12.8 Z" fill="#0a246a"/><g stroke="#fff" stroke-width="1.1" stroke-dasharray="1.1 1.2" fill="none"><path d="M2.2 8.3 L8.2 3.6"/><path d="M4.2 9.5 L10.6 4.4"/><path d="M6.2 10.7 L12.8 5.3"/><path d="M8.2 11.8 L14.6 6.2"/></g></svg><div class="t " style="left:650px;top:514px;font-weight:bold;-webkit-text-stroke:0;color:#fff">Oscilloscope-XSC2</div><div class="rb" style="left:1165px;top:513px;width:16px;height:14px"><svg class="a" style="left:0;top:0" width="14" height="12" viewBox="0 0 14 12" ><path d="M3.5 2.5 L10.5 8.5 M10.5 2.5 L3.5 8.5" stroke="#000" stroke-width="1.5" fill="none"/></svg></div><div class="a" style="left:630px;top:531px;width:552px;height:249px;border:1px solid;border-color:#808080 #fff #fff #808080"></div><div class="a" style="left:631px;top:532px;width:550px;height:247px;border:1px solid;border-color:#404040 #d4d0c8 #d4d0c8 #404040;background:#000"></div><svg class="a" style="left:632px;top:533px" width="548" height="245" viewBox="632 533 548 245"><rect x="632" y="533" width="548" height="245" fill="#000"/><g shape-rendering="crispEdges"><path d="M641.5 622.5 H644.5 V654.5 H660.6 V617.5 L662.1 622.5 L663.6 623.8 L665.1 622.5 L666.6 623.8 L668.1 622.5 L669.6 623.8 L671.1 622.5 L672.6 623.8 L674.1 622.5 L675.6 623.8 L677.1 622.5 L678.6 623.8 L680.1 622.5 L681.6 623.8 L683.1 622.5 L684.6 623.8 L686.1 622.5 L687.6 623.8 L689.1 622.5 L690.6 623.8 L692.1 622.5 L693.6 623.8 L695.1 622.5 H697.2 V654.5 H713.7 V617.5 L715.2 622.5 L716.7 623.8 L718.2 622.5 L719.7 623.8 L721.2 622.5 L722.7 623.8 L724.2 622.5 L725.7 623.8 L727.2 622.5 L728.7 623.8 L730.2 622.5 L731.7 623.8 L733.2 622.5 L734.7 623.8 L736.2 622.5 L737.7 623.8 L739.2 622.5 L740.7 623.8 L742.2 622.5 L743.7 623.8 L745.2 622.5 L746.7 623.8 L748.2 622.5 H750.3 V654.5 H766.8 V617.5 L768.3 622.5 L769.8 623.8 L771.3 622.5 L772.8 623.8 L774.3 622.5 L775.8 623.8 L777.3 622.5 L778.8 623.8 L780.3 622.5 L781.8 623.8 L783.3 622.5 L784.8 623.8 L786.3 622.5 L787.8 623.8 L789.3 622.5 L790.8 623.8 L792.3 622.5 L793.8 623.8 L795.3 622.5 L796.8 623.8 L798.3 622.5 L799.8 623.8 L801.3 622.5 H803.4 V654.5 H819.9 V617.5 L821.4 622.5 L822.9 623.8 L824.4 622.5 L825.9 623.8 L827.4 622.5 L828.9 623.8 L830.4 622.5 L831.9 623.8 L833.4 622.5 L834.9 623.8 L836.4 622.5 L837.9 623.8 L839.4 622.5 L840.9 623.8 L842.4 622.5 L843.9 623.8 L845.4 622.5 L846.9 623.8 L848.4 622.5 L849.9 623.8 L851.4 622.5 L852.9 623.8 L854.4 622.5 H856.5 V654.5 H873.0 V617.5 L874.5 622.5 L876.0 623.8 L877.5 622.5 L879.0 623.8 L880.5 622.5 L882.0 623.8 L883.5 622.5 L885.0 623.8 L886.5 622.5 L888.0 623.8 L889.5 622.5 L891.0 623.8 L892.5 622.5 L894.0 623.8 L895.5 622.5 L897.0 623.8 L898.5 622.5 L900.0 623.8 L901.5 622.5 L903.0 623.8 L904.5 622.5 L906.0 623.8 L907.5 622.5 H909.6 V654.5 H926.1 V617.5 L927.6 622.5 L929.1 623.8 L930.6 622.5 L932.1 623.8 L933.6 622.5 L935.1 623.8 L936.6 622.5 L938.1 623.8 L939.6 622.5 L941.1 623.8 L942.6 622.5 L944.1 623.8 L945.6 622.5 L947.1 623.8 L948.6 622.5 L950.1 623.8 L951.6 622.5 L953.1 623.8 L954.6 622.5 L956.1 623.8 L957.6 622.5 L959.1 623.8 L960.6 622.5 H962.7 V654.5 H979.2 V617.5 L980.7 622.5 L982.2 623.8 L983.7 622.5 L985.2 623.8 L986.7 622.5 L988.2 623.8 L989.7 622.5 L991.2 623.8 L992.7 622.5 L994.2 623.8 L995.7 622.5 L997.2 623.8 L998.7 622.5 L1000.2 623.8 L1001.7 622.5 L1003.2 623.8 L1004.7 622.5 L1006.2 623.8 L1007.7 622.5 L1009.2 623.8 L1010.7 622.5 L1012.2 623.8 L1013.7 622.5 H1015.8 V654.5 H1032.3 V617.5 L1033.8 622.5 L1035.3 623.8 L1036.8 622.5 L1038.3 623.8 L1039.8 622.5 L1041.3 623.8 L1042.8 622.5 L1044.3 623.8 L1045.8 622.5 L1047.3 623.8 L1048.8 622.5 L1050.3 623.8 L1051.8 622.5 L1053.3 623.8 L1054.8 622.5 L1056.3 623.8 L1057.8 622.5 L1059.3 623.8 L1060.8 622.5 L1062.3 623.8 L1063.8 622.5 L1065.3 623.8 L1066.8 622.5 H1068.9 V654.5 H1085.4 V617.5 L1086.9 622.5 L1088.4 623.8 L1089.9 622.5 L1091.4 623.8 L1092.9 622.5 L1094.4 623.8 L1095.9 622.5 L1097.4 623.8 L1098.9 622.5 L1100.4 623.8 L1101.9 622.5 L1103.4 623.8 L1104.9 622.5 L1106.4 623.8 L1107.9 622.5 L1109.4 623.8 L1110.9 622.5 L1112.4 623.8 L1113.9 622.5 L1115.4 623.8 L1116.9 622.5 L1118.4 623.8 L1119.9 622.5 H1122.0 V654.5 H1138.5 V617.5 L1140.0 622.5 L1141.5 623.8 L1143.0 622.5 L1144.5 623.8 L1146.0 622.5 L1147.5 623.8 L1149.0 622.5 L1150.5 623.8 L1152.0 622.5 L1153.5 623.8 L1155.0 622.5 L1156.5 623.8 L1158.0 622.5 L1159.5 623.8 L1161.0 622.5 L1162.5 623.8 L1164.0 622.5 L1165.5 623.8 L1167.0 622.5 L1168.5 623.8 L1170.0 622.5 H1172.5 " fill="none" stroke="#e02020" stroke-width="1.15" shape-rendering="auto" stroke-linejoin="miter"/><rect x="641.5" y="541" width="531.0" height="1" fill="#fff"/><rect x="641.5" y="770" width="531.0" height="1" fill="#fff"/><path d="M694.6 540 V770" stroke="#fff" stroke-width="1" stroke-dasharray="3 3" fill="none"/><path d="M747.7 540 V770" stroke="#fff" stroke-width="1" stroke-dasharray="3 3" fill="none"/><path d="M800.8 540 V770" stroke="#fff" stroke-width="1" stroke-dasharray="3 3" fill="none"/><path d="M853.9 540 V770" stroke="#fff" stroke-width="1" stroke-dasharray="3 3" fill="none"/><path d="M907.0 540 V770" stroke="#fff" stroke-width="1" stroke-dasharray="3 3" fill="none"/><path d="M960.1 540 V770" stroke="#fff" stroke-width="1" stroke-dasharray="3 3" fill="none"/><path d="M1013.2 540 V770" stroke="#fff" stroke-width="1" stroke-dasharray="3 3" fill="none"/><path d="M1066.3 540 V770" stroke="#fff" stroke-width="1" stroke-dasharray="3 3" fill="none"/><path d="M1119.4 540 V770" stroke="#fff" stroke-width="1" stroke-dasharray="3 3" fill="none"/><path d="M641.5 579.5 H1172.5" stroke="#fff" stroke-width="1" stroke-dasharray="3 3" fill="none"/><path d="M641.5 617.5 H1172.5" stroke="#fff" stroke-width="1" stroke-dasharray="3 3" fill="none"/><path d="M641.5 694.5 H1172.5" stroke="#fff" stroke-width="1" stroke-dasharray="3 3" fill="none"/><path d="M641.5 732.5 H1172.5" stroke="#fff" stroke-width="1" stroke-dasharray="3 3" fill="none"/><rect x="641.5" y="655" width="531.0" height="1.6" fill="#fff"/><rect x="640.5" y="541" width="1.6" height="230" fill="#c82028" shape-rendering="auto"/><rect x="1172" y="541" width="2" height="229" fill="#000090"/></g><path d="M635 535 H648.5 L641.7 541.5 Z" fill="#00e0e0"/><rect x="641" y="536" width="1.4" height="3" fill="#000"/><path d="M1166 535 H1179.5 L1172.7 541.5 Z" fill="#f0f000"/><rect x="1172" y="536" width="1.4" height="3" fill="#000"/></svg><div class="a" style="left:631px;top:781px;width:552px;height:13px;background:repeating-conic-gradient(#fff 0% 25%,#d4d0c8 0% 50%) 0 0/2px 2px"></div><div class="rb" style="left:631px;top:781px;width:15px;height:13px"></div><svg class="a" style="left:636px;top:784px" width="4" height="7" viewBox="0 0 4 7"><path d="M4 0 V7 L0 3.5 Z" fill="#000"/></svg><div class="rb" style="left:1167px;top:781px;width:16px;height:13px"></div><svg class="a" style="left:1173px;top:784px" width="4" height="7" viewBox="0 0 4 7"><path d="M0 0 V7 L4 3.5 Z" fill="#000"/></svg><div class="rb" style="left:1158px;top:781px;width:8px;height:13px"></div><div class="gb" style="left:630px;top:798px;width:58px;height:58px"></div><div class="t " style="left:636px;top:807px;">T1</div><div class="t " style="left:636px;top:821px;">T2</div><div class="t " style="left:636px;top:841px;transform:scaleX(0.9203);transform-origin:0 0;">T2-T1</div><div class="rb" style="left:656px;top:804px;width:15px;height:17px"></div><svg class="a" style="left:658px;top:808px" width="11" height="9" viewBox="0 0 11 9"><path d="M0 4.5 L5 0 V3 H11 V6 H5 V9 Z" fill="#000"/></svg><div class="rb" style="left:672px;top:804px;width:15px;height:17px"></div><svg class="a" style="left:674px;top:808px" width="11" height="9" viewBox="0 0 11 9"><path d="M11 4.5 L6 0 V3 H0 V6 H6 V9 Z" fill="#000"/></svg><div class="rb" style="left:656px;top:821px;width:15px;height:17px"></div><svg class="a" style="left:658px;top:825px" width="11" height="9" viewBox="0 0 11 9"><path d="M0 4.5 L5 0 V3 H11 V6 H5 V9 Z" fill="#000"/></svg><div class="rb" style="left:672px;top:821px;width:15px;height:17px"></div><svg class="a" style="left:674px;top:825px" width="11" height="9" viewBox="0 0 11 9"><path d="M11 4.5 L6 0 V3 H0 V6 H6 V9 Z" fill="#000"/></svg><div class="sk" style="left:691px;top:799px;width:323px;height:56px"></div><div class="t c" style="left:686px;top:801px;width:80px">Time</div><div class="t c" style="left:766px;top:801px;width:80px">Channel_A</div><div class="t c" style="left:846px;top:801px;width:80px">Channel_B</div><div class="t c" style="left:686px;top:814px;width:80px">69.995 ms</div><div class="t c" style="left:766px;top:814px;width:80px">867.000 mV</div><div class="t c" style="left:686px;top:827px;width:80px">70.995 ms</div><div class="t c" style="left:766px;top:827px;width:80px">894.311 mV</div><div class="t c" style="left:686px;top:840px;width:80px">1.000 ms</div><div class="t c" style="left:766px;top:840px;width:80px">27.311 mV</div><div class="rb" style="left:1020px;top:804px;width:63px;height:23px;"></div><div class="t c" style="left:1020px;top:809px;width:63px">Reverse</div><div class="rb" style="left:1020px;top:832px;width:63px;height:23px;"></div><div class="t c" style="left:1020px;top:837px;width:63px">Save</div><div class="t " style="left:1091px;top:847px;">Ext. Trigger</div><svg class="a" style="left:1153px;top:847px" width="14" height="14" viewBox="0 0 14 14"><circle cx="7" cy="7" r="5.2" fill="#d4d0c8"/><path d="M2.9 10.6 A5.4 5.4 0 0 1 10.6 2.9" fill="none" stroke="#707070" stroke-width="1.3"/><path d="M10.8 3.2 A5.4 5.4 0 0 1 3.2 10.8" fill="none" stroke="#fff" stroke-width="1.3"/></svg><div class="gb" style="left:631px;top:871px;width:127px;height:71px"></div><div class="a" style="left:637px;top:871px;width:48.5px;height:2px;background:#d4d0c8"></div><div class="t " style="left:639px;top:866px;transform:scaleX(0.9292);transform-origin:0 0;">Timebase</div><div class="t " style="left:637px;top:883px;transform:scaleX(0.9267);transform-origin:0 0;">Scale</div><div class="sk" style="left:669px;top:878px;width:64px;height:19px"></div><div class="t " style="left:675px;top:881px;">100 us/Div</div><div class="rb" style="left:734px;top:878px;width:18px;height:9px"></div><svg class="a" style="left:740px;top:881px" width="5" height="3" viewBox="0 0 5 3"><path d="M0 3 H5 L2.5 0 Z" fill="#000"/></svg><div class="rb" style="left:734px;top:887px;width:18px;height:10px"></div><svg class="a" style="left:740px;top:890px" width="5" height="3" viewBox="0 0 5 3"><path d="M0 0 H5 L2.5 3 Z" fill="#000"/></svg><div class="t " style="left:637px;top:904px;transform:scaleX(0.9729);transform-origin:0 0;">X position</div><div class="sk" style="left:691px;top:899px;width:62px;height:19px"></div><div class="t " style="left:697px;top:902px;">0</div><div class="pb" style="left:637px;top:921px;width:26px;height:20px;background:repeating-conic-gradient(#fff 0% 25%,#d4d0c8 0% 50%) 0 0/2px 2px"></div><div class="t c" style="left:638px;top:925px;width:26px">Y/T</div><div class="rb" style="left:663px;top:921px;width:27px;height:20px;"></div><div class="t c" style="left:663px;top:924px;width:27px">Add</div><div class="rb" style="left:691px;top:921px;width:29px;height:20px;"></div><div class="t c" style="left:691px;top:924px;width:29px">B/A</div><div class="rb" style="left:720px;top:921px;width:28px;height:20px;"></div><div class="t c" style="left:720px;top:924px;width:28px">A/B</div><div class="gb" style="left:759px;top:871px;width:119px;height:71px"></div><div class="a" style="left:765px;top:871px;width:53px;height:2px;background:#d4d0c8"></div><div class="t " style="left:767px;top:866px;transform:scaleX(0.9652);transform-origin:0 0;">Channel A</div><div class="t " style="left:762px;top:883px;transform:scaleX(0.9267);transform-origin:0 0;">Scale</div><div class="sk" style="left:792px;top:878px;width:84px;height:19px"></div><div class="t " style="left:798px;top:881px;">1&nbsp; V/Div</div><div class="t " style="left:762px;top:904px;transform:scaleX(0.9769);transform-origin:0 0;">Y position</div><div class="sk" style="left:814px;top:899px;width:62px;height:19px"></div><div class="t " style="left:820px;top:902px;">0</div><div class="rb" style="left:762px;top:921px;width:24px;height:20px;"></div><div class="t c" style="left:762px;top:924px;width:24px">AC</div><div class="rb" style="left:786px;top:921px;width:24px;height:20px;"></div><div class="t c" style="left:786px;top:924px;width:24px">0</div><div class="pb" style="left:810px;top:921px;width:26px;height:20px;background:repeating-conic-gradient(#fff 0% 25%,#d4d0c8 0% 50%) 0 0/2px 2px"></div><div class="t c" style="left:811px;top:925px;width:26px">DC</div><svg class="a" style="left:858px;top:922px" width="14" height="14" viewBox="0 0 14 14"><circle cx="7" cy="7" r="5.2" fill="#d4d0c8"/><path d="M2.9 10.6 A5.4 5.4 0 0 1 10.6 2.9" fill="none" stroke="#707070" stroke-width="1.3"/><path d="M10.8 3.2 A5.4 5.4 0 0 1 3.2 10.8" fill="none" stroke="#fff" stroke-width="1.3"/><circle cx="7" cy="7" r="2" fill="#909090"/></svg><div class="gb" style="left:879px;top:871px;width:126px;height:71px"></div><div class="a" style="left:885px;top:871px;width:53px;height:2px;background:#d4d0c8"></div><div class="t " style="left:887px;top:866px;transform:scaleX(0.9538);transform-origin:0 0;">Channel B</div><div class="t " style="left:882px;top:883px;transform:scaleX(0.9267);transform-origin:0 0;">Scale</div><div class="sk" style="left:916px;top:878px;width:87px;height:19px"></div><div class="t " style="left:922px;top:881px;">5&nbsp; V/Div</div><div class="t " style="left:882px;top:904px;transform:scaleX(0.9769);transform-origin:0 0;">Y position</div><div class="sk" style="left:939px;top:899px;width:64px;height:19px"></div><div class="t " style="left:945px;top:902px;">0</div><div class="rb" style="left:883px;top:923px;width:24px;height:19px;"></div><div class="t c" style="left:883px;top:926px;width:24px">AC</div><div class="rb" style="left:907px;top:923px;width:22px;height:19px;"></div><div class="t c" style="left:907px;top:926px;width:22px">0</div><div class="pb" style="left:929px;top:923px;width:28px;height:19px;background:repeating-conic-gradient(#fff 0% 25%,#d4d0c8 0% 50%) 0 0/2px 2px"></div><div class="t c" style="left:930px;top:927px;width:28px">DC</div><div class="rb" style="left:957px;top:923px;width:19px;height:19px;"></div><div class="t c" style="left:957px;top:926px;width:19px">-</div><svg class="a" style="left:990px;top:924px" width="14" height="14" viewBox="0 0 14 14"><circle cx="7" cy="7" r="5.2" fill="#d4d0c8"/><path d="M2.9 10.6 A5.4 5.4 0 0 1 10.6 2.9" fill="none" stroke="#707070" stroke-width="1.3"/><path d="M10.8 3.2 A5.4 5.4 0 0 1 3.2 10.8" fill="none" stroke="#fff" stroke-width="1.3"/></svg><div class="gb" style="left:1006px;top:871px;width:175px;height:71px"></div><div class="a" style="left:1013px;top:871px;width:37px;height:2px;background:#d4d0c8"></div><div class="t " style="left:1015px;top:866px;transform:scaleX(0.9583);transform-origin:0 0;">Trigger</div><div class="t " style="left:1010px;top:883px;">Edge</div><div class="t " style="left:1010px;top:903px;">Level</div><div class="t " style="left:1011px;top:925px;">Type</div><div class="pb" style="left:1051px;top:881px;width:21px;height:17px;background:repeating-conic-gradient(#fff 0% 25%,#d4d0c8 0% 50%) 0 0/2px 2px"></div><div class="t c" style="left:1052px;top:884px;width:21px"></div><div class="rb" style="left:1073px;top:881px;width:22px;height:17px;"></div><div class="t c" style="left:1073px;top:883px;width:22px"></div><svg class="a" style="left:1056px;top:884px" width="12" height="10" viewBox="0 0 12 10"><path d="M0.5 9 H5.5 V1 H10 M3 5 H8 M5.5 3 L3.5 5.5 M5.5 3 L7.5 5.5" fill="none" stroke="#000" stroke-width="1.1"/></svg><svg class="a" style="left:1078px;top:884px" width="12" height="10" viewBox="0 0 12 10"><path d="M0.5 1 H5.5 V9 H10 M3 5 H8 M5.5 7 L3.5 4.5 M5.5 7 L7.5 4.5" fill="none" stroke="#000" stroke-width="1.1"/></svg><div class="pb" style="left:1098px;top:881px;width:24px;height:18px;background:repeating-conic-gradient(#fff 0% 25%,#d4d0c8 0% 50%) 0 0/2px 2px"></div><div class="t c dis" style="left:1099px;top:884px;width:24px">A</div><div class="rb" style="left:1123px;top:881px;width:23px;height:18px;"></div><div class="t c dis" style="left:1123px;top:883px;width:23px">B</div><div class="rb" style="left:1146px;top:881px;width:28px;height:18px;"></div><div class="t c dis" style="left:1146px;top:883px;width:28px">Ext</div><div class="sk" style="left:1051px;top:902px;width:89px;height:18px"></div><div class="t " style="left:1057px;top:904px;">0</div><div class="sk" style="left:1142px;top:902px;width:32px;height:18px"></div><div class="t " style="left:1149px;top:904px;">V</div><div class="rb" style="left:1041px;top:921px;width:33px;height:20px;"></div><div class="t c" style="left:1041px;top:924px;width:33px">Sing.</div><div class="rb" style="left:1075px;top:921px;width:32px;height:20px;"></div><div class="t c" style="left:1075px;top:924px;width:32px">Nor.</div><div class="rb" style="left:1108px;top:921px;width:32px;height:20px;"></div><div class="t c" style="left:1108px;top:924px;width:32px">Auto</div><div class="pb" style="left:1141px;top:921px;width:34px;height:20px;background:repeating-conic-gradient(#fff 0% 25%,#d4d0c8 0% 50%) 0 0/2px 2px"></div><div class="t c" style="left:1142px;top:925px;width:34px">None</div>
</div>
</body></html>
